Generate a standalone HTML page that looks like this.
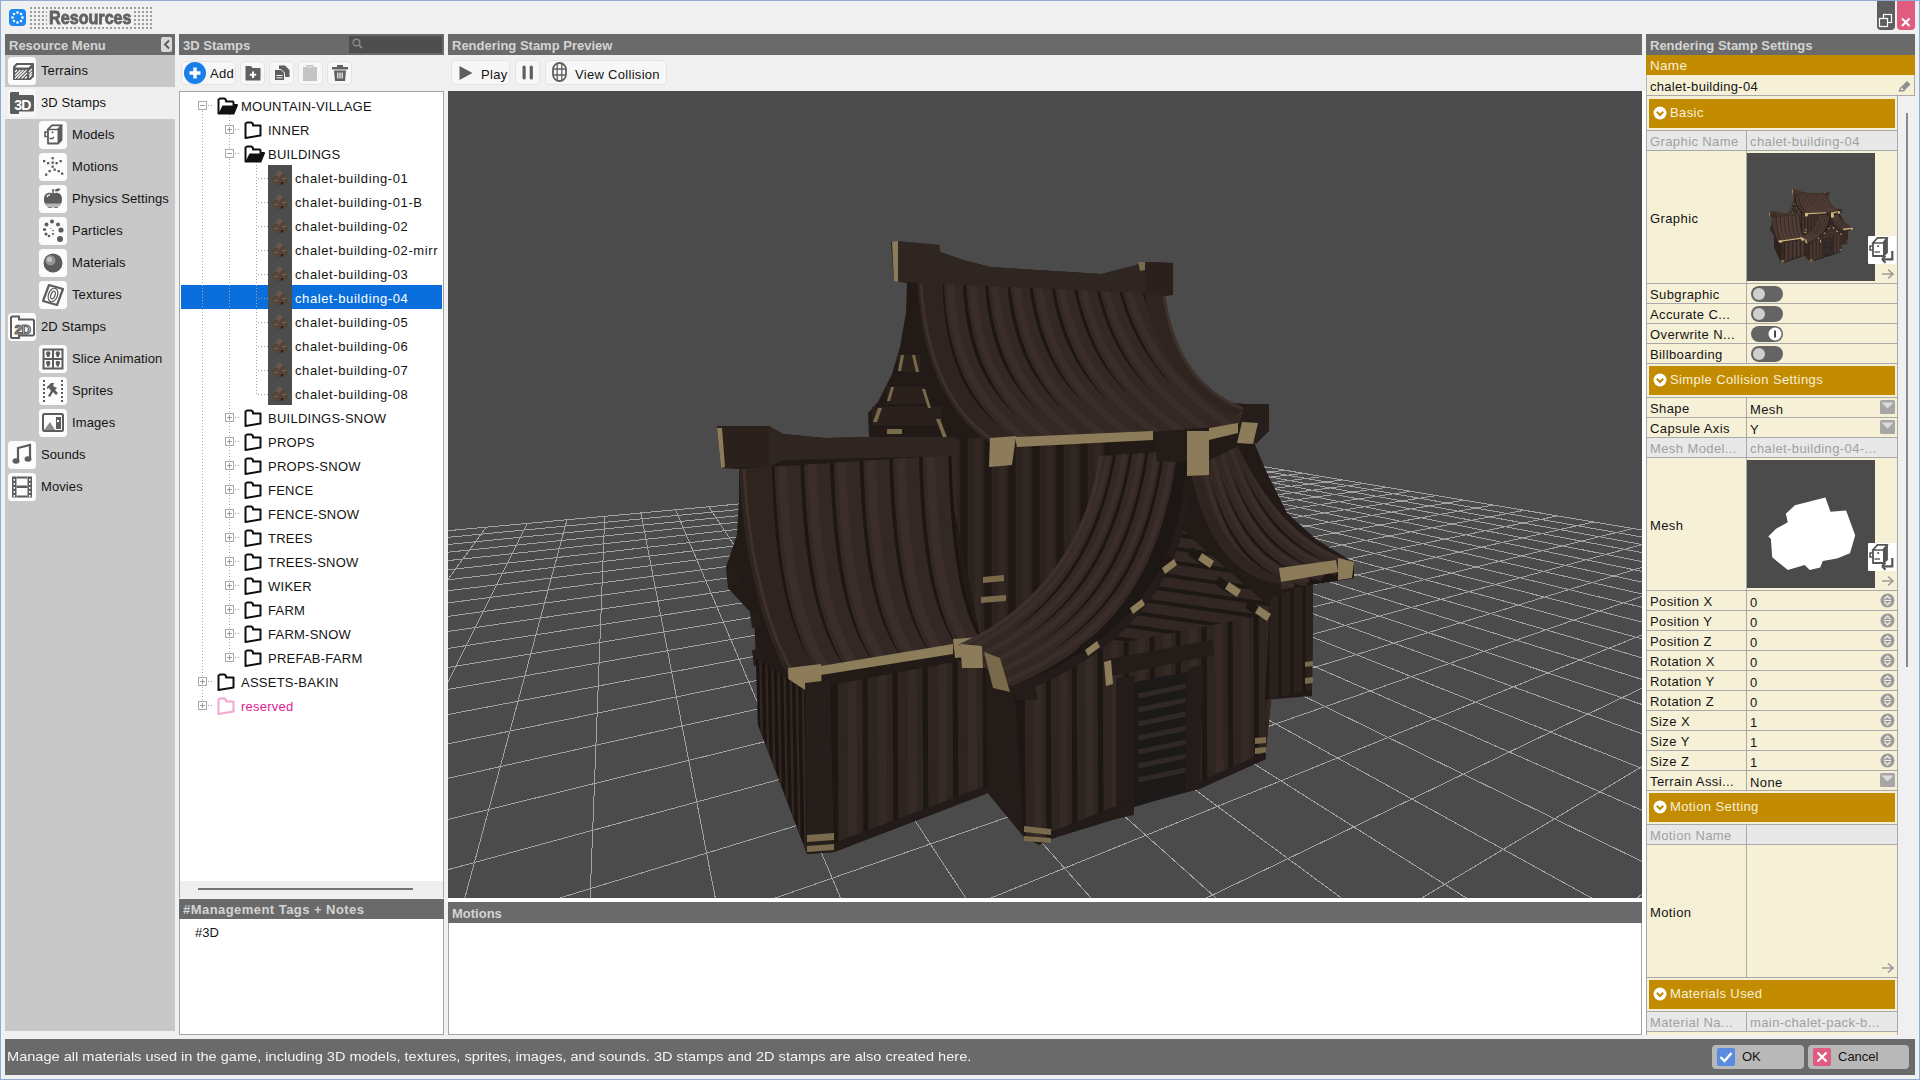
<!DOCTYPE html><html><head><meta charset="utf-8"><style>
*{margin:0;padding:0;box-sizing:border-box}
html,body{width:1920px;height:1080px;overflow:hidden;background:#f0f0f0;font-family:"Liberation Sans",sans-serif}
body>div,body>svg{position:absolute}
.t{white-space:nowrap;font-size:13px;line-height:16px;color:#141414}
.hd{white-space:nowrap;font-size:13px;line-height:16px;color:#d4d4d4;font-weight:bold}
</style></head><body>
<div style="left:0px;top:0px;width:1920px;height:1080px;border:1px solid #8eacd4;"></div>
<svg style="left:9px;top:9px" width="17" height="17" viewBox="0 0 17 17"><rect x="0" y="0" width="17" height="17" rx="4" fill="#1a88f0"/><circle cx="13.50" cy="8.50" r="1.3" fill="#fff"/><circle cx="12.04" cy="12.04" r="1.3" fill="#fff"/><circle cx="8.50" cy="13.50" r="1.3" fill="#fff"/><circle cx="4.96" cy="12.04" r="1.3" fill="#fff"/><circle cx="3.50" cy="8.50" r="1.3" fill="#fff"/><circle cx="4.96" cy="4.96" r="1.3" fill="#fff"/><circle cx="8.50" cy="3.50" r="1.3" fill="#fff"/><circle cx="12.04" cy="4.96" r="1.3" fill="#fff"/></svg>
<svg style="left:30px;top:7px" width="123" height="23"><rect x="0" y="0" width="2" height="2" fill="#9c9c9c"/><rect x="0" y="4" width="2" height="2" fill="#9c9c9c"/><rect x="0" y="8" width="2" height="2" fill="#9c9c9c"/><rect x="0" y="12" width="2" height="2" fill="#9c9c9c"/><rect x="0" y="16" width="2" height="2" fill="#9c9c9c"/><rect x="0" y="20" width="2" height="2" fill="#9c9c9c"/><rect x="4" y="0" width="2" height="2" fill="#9c9c9c"/><rect x="4" y="4" width="2" height="2" fill="#9c9c9c"/><rect x="4" y="8" width="2" height="2" fill="#9c9c9c"/><rect x="4" y="12" width="2" height="2" fill="#9c9c9c"/><rect x="4" y="16" width="2" height="2" fill="#9c9c9c"/><rect x="4" y="20" width="2" height="2" fill="#9c9c9c"/><rect x="8" y="0" width="2" height="2" fill="#9c9c9c"/><rect x="8" y="4" width="2" height="2" fill="#9c9c9c"/><rect x="8" y="8" width="2" height="2" fill="#9c9c9c"/><rect x="8" y="12" width="2" height="2" fill="#9c9c9c"/><rect x="8" y="16" width="2" height="2" fill="#9c9c9c"/><rect x="8" y="20" width="2" height="2" fill="#9c9c9c"/><rect x="12" y="0" width="2" height="2" fill="#9c9c9c"/><rect x="12" y="4" width="2" height="2" fill="#9c9c9c"/><rect x="12" y="8" width="2" height="2" fill="#9c9c9c"/><rect x="12" y="12" width="2" height="2" fill="#9c9c9c"/><rect x="12" y="16" width="2" height="2" fill="#9c9c9c"/><rect x="12" y="20" width="2" height="2" fill="#9c9c9c"/><rect x="16" y="0" width="2" height="2" fill="#9c9c9c"/><rect x="16" y="4" width="2" height="2" fill="#9c9c9c"/><rect x="16" y="8" width="2" height="2" fill="#9c9c9c"/><rect x="16" y="12" width="2" height="2" fill="#9c9c9c"/><rect x="16" y="16" width="2" height="2" fill="#9c9c9c"/><rect x="16" y="20" width="2" height="2" fill="#9c9c9c"/><rect x="20" y="0" width="2" height="2" fill="#9c9c9c"/><rect x="20" y="4" width="2" height="2" fill="#9c9c9c"/><rect x="20" y="8" width="2" height="2" fill="#9c9c9c"/><rect x="20" y="12" width="2" height="2" fill="#9c9c9c"/><rect x="20" y="16" width="2" height="2" fill="#9c9c9c"/><rect x="20" y="20" width="2" height="2" fill="#9c9c9c"/><rect x="24" y="0" width="2" height="2" fill="#9c9c9c"/><rect x="24" y="4" width="2" height="2" fill="#9c9c9c"/><rect x="24" y="8" width="2" height="2" fill="#9c9c9c"/><rect x="24" y="12" width="2" height="2" fill="#9c9c9c"/><rect x="24" y="16" width="2" height="2" fill="#9c9c9c"/><rect x="24" y="20" width="2" height="2" fill="#9c9c9c"/><rect x="28" y="0" width="2" height="2" fill="#9c9c9c"/><rect x="28" y="4" width="2" height="2" fill="#9c9c9c"/><rect x="28" y="8" width="2" height="2" fill="#9c9c9c"/><rect x="28" y="12" width="2" height="2" fill="#9c9c9c"/><rect x="28" y="16" width="2" height="2" fill="#9c9c9c"/><rect x="28" y="20" width="2" height="2" fill="#9c9c9c"/><rect x="32" y="0" width="2" height="2" fill="#9c9c9c"/><rect x="32" y="4" width="2" height="2" fill="#9c9c9c"/><rect x="32" y="8" width="2" height="2" fill="#9c9c9c"/><rect x="32" y="12" width="2" height="2" fill="#9c9c9c"/><rect x="32" y="16" width="2" height="2" fill="#9c9c9c"/><rect x="32" y="20" width="2" height="2" fill="#9c9c9c"/><rect x="36" y="0" width="2" height="2" fill="#9c9c9c"/><rect x="36" y="4" width="2" height="2" fill="#9c9c9c"/><rect x="36" y="8" width="2" height="2" fill="#9c9c9c"/><rect x="36" y="12" width="2" height="2" fill="#9c9c9c"/><rect x="36" y="16" width="2" height="2" fill="#9c9c9c"/><rect x="36" y="20" width="2" height="2" fill="#9c9c9c"/><rect x="40" y="0" width="2" height="2" fill="#9c9c9c"/><rect x="40" y="4" width="2" height="2" fill="#9c9c9c"/><rect x="40" y="8" width="2" height="2" fill="#9c9c9c"/><rect x="40" y="12" width="2" height="2" fill="#9c9c9c"/><rect x="40" y="16" width="2" height="2" fill="#9c9c9c"/><rect x="40" y="20" width="2" height="2" fill="#9c9c9c"/><rect x="44" y="0" width="2" height="2" fill="#9c9c9c"/><rect x="44" y="4" width="2" height="2" fill="#9c9c9c"/><rect x="44" y="8" width="2" height="2" fill="#9c9c9c"/><rect x="44" y="12" width="2" height="2" fill="#9c9c9c"/><rect x="44" y="16" width="2" height="2" fill="#9c9c9c"/><rect x="44" y="20" width="2" height="2" fill="#9c9c9c"/><rect x="48" y="0" width="2" height="2" fill="#9c9c9c"/><rect x="48" y="4" width="2" height="2" fill="#9c9c9c"/><rect x="48" y="8" width="2" height="2" fill="#9c9c9c"/><rect x="48" y="12" width="2" height="2" fill="#9c9c9c"/><rect x="48" y="16" width="2" height="2" fill="#9c9c9c"/><rect x="48" y="20" width="2" height="2" fill="#9c9c9c"/><rect x="52" y="0" width="2" height="2" fill="#9c9c9c"/><rect x="52" y="4" width="2" height="2" fill="#9c9c9c"/><rect x="52" y="8" width="2" height="2" fill="#9c9c9c"/><rect x="52" y="12" width="2" height="2" fill="#9c9c9c"/><rect x="52" y="16" width="2" height="2" fill="#9c9c9c"/><rect x="52" y="20" width="2" height="2" fill="#9c9c9c"/><rect x="56" y="0" width="2" height="2" fill="#9c9c9c"/><rect x="56" y="4" width="2" height="2" fill="#9c9c9c"/><rect x="56" y="8" width="2" height="2" fill="#9c9c9c"/><rect x="56" y="12" width="2" height="2" fill="#9c9c9c"/><rect x="56" y="16" width="2" height="2" fill="#9c9c9c"/><rect x="56" y="20" width="2" height="2" fill="#9c9c9c"/><rect x="60" y="0" width="2" height="2" fill="#9c9c9c"/><rect x="60" y="4" width="2" height="2" fill="#9c9c9c"/><rect x="60" y="8" width="2" height="2" fill="#9c9c9c"/><rect x="60" y="12" width="2" height="2" fill="#9c9c9c"/><rect x="60" y="16" width="2" height="2" fill="#9c9c9c"/><rect x="60" y="20" width="2" height="2" fill="#9c9c9c"/><rect x="64" y="0" width="2" height="2" fill="#9c9c9c"/><rect x="64" y="4" width="2" height="2" fill="#9c9c9c"/><rect x="64" y="8" width="2" height="2" fill="#9c9c9c"/><rect x="64" y="12" width="2" height="2" fill="#9c9c9c"/><rect x="64" y="16" width="2" height="2" fill="#9c9c9c"/><rect x="64" y="20" width="2" height="2" fill="#9c9c9c"/><rect x="68" y="0" width="2" height="2" fill="#9c9c9c"/><rect x="68" y="4" width="2" height="2" fill="#9c9c9c"/><rect x="68" y="8" width="2" height="2" fill="#9c9c9c"/><rect x="68" y="12" width="2" height="2" fill="#9c9c9c"/><rect x="68" y="16" width="2" height="2" fill="#9c9c9c"/><rect x="68" y="20" width="2" height="2" fill="#9c9c9c"/><rect x="72" y="0" width="2" height="2" fill="#9c9c9c"/><rect x="72" y="4" width="2" height="2" fill="#9c9c9c"/><rect x="72" y="8" width="2" height="2" fill="#9c9c9c"/><rect x="72" y="12" width="2" height="2" fill="#9c9c9c"/><rect x="72" y="16" width="2" height="2" fill="#9c9c9c"/><rect x="72" y="20" width="2" height="2" fill="#9c9c9c"/><rect x="76" y="0" width="2" height="2" fill="#9c9c9c"/><rect x="76" y="4" width="2" height="2" fill="#9c9c9c"/><rect x="76" y="8" width="2" height="2" fill="#9c9c9c"/><rect x="76" y="12" width="2" height="2" fill="#9c9c9c"/><rect x="76" y="16" width="2" height="2" fill="#9c9c9c"/><rect x="76" y="20" width="2" height="2" fill="#9c9c9c"/><rect x="80" y="0" width="2" height="2" fill="#9c9c9c"/><rect x="80" y="4" width="2" height="2" fill="#9c9c9c"/><rect x="80" y="8" width="2" height="2" fill="#9c9c9c"/><rect x="80" y="12" width="2" height="2" fill="#9c9c9c"/><rect x="80" y="16" width="2" height="2" fill="#9c9c9c"/><rect x="80" y="20" width="2" height="2" fill="#9c9c9c"/><rect x="84" y="0" width="2" height="2" fill="#9c9c9c"/><rect x="84" y="4" width="2" height="2" fill="#9c9c9c"/><rect x="84" y="8" width="2" height="2" fill="#9c9c9c"/><rect x="84" y="12" width="2" height="2" fill="#9c9c9c"/><rect x="84" y="16" width="2" height="2" fill="#9c9c9c"/><rect x="84" y="20" width="2" height="2" fill="#9c9c9c"/><rect x="88" y="0" width="2" height="2" fill="#9c9c9c"/><rect x="88" y="4" width="2" height="2" fill="#9c9c9c"/><rect x="88" y="8" width="2" height="2" fill="#9c9c9c"/><rect x="88" y="12" width="2" height="2" fill="#9c9c9c"/><rect x="88" y="16" width="2" height="2" fill="#9c9c9c"/><rect x="88" y="20" width="2" height="2" fill="#9c9c9c"/><rect x="92" y="0" width="2" height="2" fill="#9c9c9c"/><rect x="92" y="4" width="2" height="2" fill="#9c9c9c"/><rect x="92" y="8" width="2" height="2" fill="#9c9c9c"/><rect x="92" y="12" width="2" height="2" fill="#9c9c9c"/><rect x="92" y="16" width="2" height="2" fill="#9c9c9c"/><rect x="92" y="20" width="2" height="2" fill="#9c9c9c"/><rect x="96" y="0" width="2" height="2" fill="#9c9c9c"/><rect x="96" y="4" width="2" height="2" fill="#9c9c9c"/><rect x="96" y="8" width="2" height="2" fill="#9c9c9c"/><rect x="96" y="12" width="2" height="2" fill="#9c9c9c"/><rect x="96" y="16" width="2" height="2" fill="#9c9c9c"/><rect x="96" y="20" width="2" height="2" fill="#9c9c9c"/><rect x="100" y="0" width="2" height="2" fill="#9c9c9c"/><rect x="100" y="4" width="2" height="2" fill="#9c9c9c"/><rect x="100" y="8" width="2" height="2" fill="#9c9c9c"/><rect x="100" y="12" width="2" height="2" fill="#9c9c9c"/><rect x="100" y="16" width="2" height="2" fill="#9c9c9c"/><rect x="100" y="20" width="2" height="2" fill="#9c9c9c"/><rect x="104" y="0" width="2" height="2" fill="#9c9c9c"/><rect x="104" y="4" width="2" height="2" fill="#9c9c9c"/><rect x="104" y="8" width="2" height="2" fill="#9c9c9c"/><rect x="104" y="12" width="2" height="2" fill="#9c9c9c"/><rect x="104" y="16" width="2" height="2" fill="#9c9c9c"/><rect x="104" y="20" width="2" height="2" fill="#9c9c9c"/><rect x="108" y="0" width="2" height="2" fill="#9c9c9c"/><rect x="108" y="4" width="2" height="2" fill="#9c9c9c"/><rect x="108" y="8" width="2" height="2" fill="#9c9c9c"/><rect x="108" y="12" width="2" height="2" fill="#9c9c9c"/><rect x="108" y="16" width="2" height="2" fill="#9c9c9c"/><rect x="108" y="20" width="2" height="2" fill="#9c9c9c"/><rect x="112" y="0" width="2" height="2" fill="#9c9c9c"/><rect x="112" y="4" width="2" height="2" fill="#9c9c9c"/><rect x="112" y="8" width="2" height="2" fill="#9c9c9c"/><rect x="112" y="12" width="2" height="2" fill="#9c9c9c"/><rect x="112" y="16" width="2" height="2" fill="#9c9c9c"/><rect x="112" y="20" width="2" height="2" fill="#9c9c9c"/><rect x="116" y="0" width="2" height="2" fill="#9c9c9c"/><rect x="116" y="4" width="2" height="2" fill="#9c9c9c"/><rect x="116" y="8" width="2" height="2" fill="#9c9c9c"/><rect x="116" y="12" width="2" height="2" fill="#9c9c9c"/><rect x="116" y="16" width="2" height="2" fill="#9c9c9c"/><rect x="116" y="20" width="2" height="2" fill="#9c9c9c"/><rect x="120" y="0" width="2" height="2" fill="#9c9c9c"/><rect x="120" y="4" width="2" height="2" fill="#9c9c9c"/><rect x="120" y="8" width="2" height="2" fill="#9c9c9c"/><rect x="120" y="12" width="2" height="2" fill="#9c9c9c"/><rect x="120" y="16" width="2" height="2" fill="#9c9c9c"/><rect x="120" y="20" width="2" height="2" fill="#9c9c9c"/></svg>
<div style="left:47px;top:10px;width:87px;height:16px;background:#f0f0f0"></div>
<div style="left:49px;top:5px;font-size:19px;line-height:26px;font-weight:bold;color:#626262;-webkit-text-stroke:0.9px #626262;transform:scaleX(0.85);transform-origin:0 0;white-space:nowrap">Resources</div>
<div style="left:1877px;top:1px;width:18px;height:29px;background:#5e5e5e;border-radius:0 0 4px 4px"></div>
<svg style="left:1877px;top:1px" width="18" height="29"><rect x="6.5" y="13.5" width="8" height="8" fill="none" stroke="#fff" stroke-width="1.2"/><rect x="2.5" y="17.5" width="8" height="8" fill="#5e5e5e" stroke="#fff" stroke-width="1.2"/></svg>
<div style="left:1897px;top:1px;width:18px;height:29px;background:#e05b7f;border-radius:0 0 4px 4px"></div>
<svg style="left:1897px;top:1px" width="18" height="29"><path d="M5 17.5 L12.5 25 M12.5 17.5 L5 25" stroke="#fff" stroke-width="2"/></svg>
<div style="left:5px;top:34px;width:170px;height:21px;background:#6a6a6a"></div>
<div class="hd" style="left:9px;top:38px;">Resource Menu</div>
<div style="left:179px;top:34px;width:265px;height:21px;background:#6a6a6a"></div>
<div class="hd" style="left:183px;top:38px;">3D Stamps</div>
<div style="left:448px;top:34px;width:1194px;height:21px;background:#6a6a6a"></div>
<div class="hd" style="left:452px;top:38px;">Rendering Stamp Preview</div>
<div style="left:1646px;top:34px;width:269px;height:21px;background:#6a6a6a"></div>
<div class="hd" style="left:1650px;top:38px;">Rendering Stamp Settings</div>
<div style="left:161px;top:37px;width:11px;height:15px;background:#d8d8d8;border-radius:2px"></div>
<svg style="left:161px;top:37px" width="11" height="15"><path d="M8 3.5 L4 7.5 L8 11.5" fill="none" stroke="#5a5a5a" stroke-width="1.8"/></svg>
<div style="left:349px;top:36px;width:93px;height:17px;background:#4e4e4e"></div>
<svg style="left:351px;top:37px" width="14" height="14"><circle cx="5.5" cy="5.5" r="3.3" fill="none" stroke="#8a8a8a" stroke-width="1.4"/><path d="M8 8 L11 11" stroke="#8a8a8a" stroke-width="1.8"/></svg>
<div style="left:5px;top:55px;width:170px;height:976px;background:#c8c8c8"></div>
<div style="left:5px;top:87px;width:170px;height:32px;background:#efefef"></div>
<div style="left:8px;top:57px;width:28px;height:28px;background:#fcfcfc;border-radius:4px"></div>
<svg style="left:8px;top:57px" width="28" height="28" viewBox="0 0 28 28"><path d="M5 9.5 L8.5 6 H25.5 L26 6.5 V19.5 L22.5 23 H5.5 L5 22.5 Z" fill="#5c5c5c"/><path d="M9.5 8 H23 L20.5 10.5 H7 Z" fill="#fff"/><path d="M7 15 L9 13 M7 18.5 L12.5 13 M7 21.5 L15.5 13 M10 21.5 L18.5 13 M13.5 21.5 L19 16 M17 21.5 L19 19.5 M21 15 L24 12 M21 18 L24 15 M21 20.5 L24 17.5" stroke="#fff" stroke-width="1.1"/></svg>
<div class="t" style="left:41px;top:63px;font-size:13px;letter-spacing:0.1px">Terrains</div>
<div style="left:8px;top:89px;width:28px;height:28px;background:#f7f7f7;border-radius:4px"></div>
<svg style="left:8px;top:89px" width="28" height="28" viewBox="0 0 28 28"><path d="M2 4 L3 3 H11 V6 H25 L26 7 V21.5 L25 22.5 H11 V25 H3 L2 24 Z" fill="#5c5c5c"/><text x="14.5" y="21" font-family="Liberation Sans" font-weight="bold" font-size="14" fill="#fff" text-anchor="middle" letter-spacing="-0.8">3D</text></svg>
<div class="t" style="left:41px;top:95px;font-size:13px;letter-spacing:0.1px">3D Stamps</div>
<div style="left:39px;top:121px;width:28px;height:28px;background:#fcfcfc;border-radius:4px"></div>
<svg style="left:39px;top:121px" width="28" height="28" viewBox="0 0 28 28"><path d="M9 8.5 L13 4.5 H22.5 V19 L19 22.5 H9 Z" fill="#fff" stroke="#5c5c5c" stroke-width="1.8" stroke-linejoin="round"/><path d="M13 4.5 L9 8.5 H18.5 L22.5 4.5 Z" fill="#fff" stroke="#5c5c5c" stroke-width="1.5"/><path d="M18.5 8.5 L22.5 4.5 V19 L18.5 22.5 Z" fill="#5c5c5c"/><path d="M9 11 H6 V15.5 H9" fill="none" stroke="#5c5c5c" stroke-width="1.6"/><rect x="12.6" y="10.5" width="1.8" height="1.8" fill="#5c5c5c"/><path d="M10.5 17.5 H13.5 L15 16" fill="none" stroke="#5c5c5c" stroke-width="1.4"/></svg>
<div class="t" style="left:72px;top:127px;font-size:13px;letter-spacing:0.1px">Models</div>
<div style="left:39px;top:153px;width:28px;height:28px;background:#fcfcfc;border-radius:4px"></div>
<svg style="left:39px;top:153px" width="28" height="28" viewBox="0 0 28 28"><rect x="12.5" y="4" width="2.3" height="2.3" fill="#5c5c5c"/><rect x="4" y="7" width="2.3" height="2.3" fill="#5c5c5c"/><rect x="8" y="9" width="2.3" height="2.3" fill="#5c5c5c"/><rect x="12.5" y="8.5" width="2.3" height="2.3" fill="#5c5c5c"/><rect x="16.5" y="9" width="2.3" height="2.3" fill="#5c5c5c"/><rect x="20.5" y="7" width="2.3" height="2.3" fill="#5c5c5c"/><rect x="12.5" y="12.5" width="2.3" height="2.3" fill="#5c5c5c"/><rect x="14.5" y="15.5" width="2.3" height="2.3" fill="#5c5c5c"/><rect x="9.5" y="17" width="2.3" height="2.3" fill="#5c5c5c"/><rect x="18.5" y="17" width="2.3" height="2.3" fill="#5c5c5c"/><rect x="6" y="20.5" width="2.3" height="2.3" fill="#5c5c5c"/><rect x="22" y="19.5" width="2.3" height="2.3" fill="#5c5c5c"/></svg>
<div class="t" style="left:72px;top:159px;font-size:13px;letter-spacing:0.1px">Motions</div>
<div style="left:39px;top:185px;width:28px;height:28px;background:#fcfcfc;border-radius:4px"></div>
<svg style="left:39px;top:185px" width="28" height="28" viewBox="0 0 28 28"><path d="M14 8.5 C10 6.5 5 8 5 14 C5 19.5 8 23 11 23 C12.5 23 13 22.3 14 22.3 C15 22.3 15.5 23 17 23 C20 23 23 19.5 23 14 C23 8 18 6.5 14 8.5 Z" fill="#5c5c5c"/><path d="M14 8.5 V4" stroke="#5c5c5c" stroke-width="1.6"/><path d="M15.5 6 C16.5 3.5 19.5 3 21.5 4 C20.5 6.5 17.5 7 15.5 6 Z" fill="#5c5c5c"/><path d="M8 12 C8.5 10.5 10 9.8 11 10" stroke="#fff" stroke-width="1.3" fill="none"/><path d="M5.5 18.5 H22.5 L21 22 H7 Z" fill="#fff" opacity="0.55"/></svg>
<div class="t" style="left:72px;top:191px;font-size:13px;letter-spacing:0.1px">Physics Settings</div>
<div style="left:39px;top:217px;width:28px;height:28px;background:#fcfcfc;border-radius:4px"></div>
<svg style="left:39px;top:217px" width="28" height="28" viewBox="0 0 28 28"><circle cx="13" cy="4.5" r="2" fill="#5c5c5c"/><circle cx="7.5" cy="7.5" r="1.9" fill="#5c5c5c"/><circle cx="19" cy="7.5" r="2" fill="#5c5c5c"/><circle cx="5.5" cy="12.5" r="1.6" fill="#5c5c5c"/><circle cx="22" cy="13" r="2.6" fill="#5c5c5c"/><circle cx="7" cy="17" r="1.6" fill="#5c5c5c"/><circle cx="10" cy="19" r="1.3" fill="#5c5c5c"/><circle cx="14" cy="17" r="1.1" fill="#5c5c5c"/><circle cx="14" cy="13.5" r="0.8" fill="#5c5c5c"/><circle cx="12" cy="11.5" r="0.5" fill="#5c5c5c"/><circle cx="21" cy="22" r="3" fill="#5c5c5c"/></svg>
<div class="t" style="left:72px;top:223px;font-size:13px;letter-spacing:0.1px">Particles</div>
<div style="left:39px;top:249px;width:28px;height:28px;background:#fcfcfc;border-radius:4px"></div>
<svg style="left:39px;top:249px" width="28" height="28" viewBox="0 0 28 28"><circle cx="14" cy="14" r="9.5" fill="#5c5c5c"/><circle cx="11.5" cy="11.5" r="5" fill="#fff" opacity="0.35"/><circle cx="10.5" cy="10.5" r="2.5" fill="#fff" opacity="0.45"/></svg>
<div class="t" style="left:72px;top:255px;font-size:13px;letter-spacing:0.1px">Materials</div>
<div style="left:39px;top:281px;width:28px;height:28px;background:#fcfcfc;border-radius:4px"></div>
<svg style="left:39px;top:281px" width="28" height="28" viewBox="0 0 28 28"><path d="M10 4 L24 8 L18 24 L4 20 Z" fill="none" stroke="#5c5c5c" stroke-width="2.2" stroke-linejoin="round"/><ellipse cx="14" cy="14" rx="2" ry="4" transform="rotate(20 14 14)" fill="none" stroke="#5c5c5c" stroke-width="1.2"/><ellipse cx="14" cy="14" rx="4.5" ry="7" transform="rotate(20 14 14)" fill="none" stroke="#5c5c5c" stroke-width="1.2"/></svg>
<div class="t" style="left:72px;top:287px;font-size:13px;letter-spacing:0.1px">Textures</div>
<div style="left:8px;top:313px;width:28px;height:28px;background:#fcfcfc;border-radius:4px"></div>
<svg style="left:8px;top:313px" width="28" height="28" viewBox="0 0 28 28"><path d="M3 4.5 L4 3.5 H11 V6.5 H25 L26 7.5 V21.5 L25 22.5 H11 V25 H4 L3 24 Z" fill="none" stroke="#5c5c5c" stroke-width="2"/><text x="14.5" y="21" font-family="Liberation Sans" font-weight="bold" font-size="13" fill="none" stroke="#5c5c5c" stroke-width="1.2" text-anchor="middle" letter-spacing="-0.6">2D</text></svg>
<div class="t" style="left:41px;top:319px;font-size:13px;letter-spacing:0.1px">2D Stamps</div>
<div style="left:39px;top:345px;width:28px;height:28px;background:#fcfcfc;border-radius:4px"></div>
<svg style="left:39px;top:345px" width="28" height="28" viewBox="0 0 28 28"><rect x="4.5" y="4.5" width="19" height="19" fill="none" stroke="#5c5c5c" stroke-width="2"/><path d="M14 4.5 V23.5 M4.5 14 H23.5" stroke="#5c5c5c" stroke-width="2"/><circle cx="9.2" cy="8.5" r="2.2" fill="#5c5c5c"/><rect x="7.999999999999999" y="9.5" width="2.4" height="2.5" fill="#5c5c5c"/><circle cx="18.8" cy="8.5" r="2.2" fill="#5c5c5c"/><rect x="17.6" y="9.5" width="2.4" height="2.5" fill="#5c5c5c"/><circle cx="9.2" cy="18" r="2.2" fill="#5c5c5c"/><rect x="7.999999999999999" y="19" width="2.4" height="2.5" fill="#5c5c5c"/><circle cx="18.8" cy="18" r="2.2" fill="#5c5c5c"/><rect x="17.6" y="19" width="2.4" height="2.5" fill="#5c5c5c"/></svg>
<div class="t" style="left:72px;top:351px;font-size:13px;letter-spacing:0.1px">Slice Animation</div>
<div style="left:39px;top:377px;width:28px;height:28px;background:#fcfcfc;border-radius:4px"></div>
<svg style="left:39px;top:377px" width="28" height="28" viewBox="0 0 28 28"><rect x="4" y="3" width="2" height="2" fill="#5c5c5c"/><rect x="4" y="7" width="2" height="2" fill="#5c5c5c"/><rect x="4" y="11" width="2" height="2" fill="#5c5c5c"/><rect x="4" y="15" width="2" height="2" fill="#5c5c5c"/><rect x="4" y="19" width="2" height="2" fill="#5c5c5c"/><rect x="4" y="23" width="2" height="2" fill="#5c5c5c"/><rect x="22" y="3" width="2" height="2" fill="#5c5c5c"/><rect x="22" y="7" width="2" height="2" fill="#5c5c5c"/><rect x="22" y="11" width="2" height="2" fill="#5c5c5c"/><rect x="22" y="15" width="2" height="2" fill="#5c5c5c"/><rect x="22" y="19" width="2" height="2" fill="#5c5c5c"/><rect x="22" y="23" width="2" height="2" fill="#5c5c5c"/><path d="M12 6 L15 6 L14 9 L18 11 L16 13 L19 16 L17 18 L14 15 L11 20 L9 19 L12 14 L10 11 L8 12 L8 10 Z" fill="#5c5c5c"/></svg>
<div class="t" style="left:72px;top:383px;font-size:13px;letter-spacing:0.1px">Sprites</div>
<div style="left:39px;top:409px;width:28px;height:28px;background:#fcfcfc;border-radius:4px"></div>
<svg style="left:39px;top:409px" width="28" height="28" viewBox="0 0 28 28"><rect x="4" y="5" width="20" height="17" rx="1.5" fill="none" stroke="#5c5c5c" stroke-width="2"/><path d="M5 21 L11 13 L16 21 Z" fill="#5c5c5c" opacity="0.7"/><path d="M17 8 H22 V20 H17 Z" fill="#5c5c5c"/><circle cx="19" cy="12" r="1.2" fill="#fff"/></svg>
<div class="t" style="left:72px;top:415px;font-size:13px;letter-spacing:0.1px">Images</div>
<div style="left:8px;top:441px;width:28px;height:28px;background:#fcfcfc;border-radius:4px"></div>
<svg style="left:8px;top:441px" width="28" height="28" viewBox="0 0 28 28"><path d="M10 19 V7 L22 4 V17" fill="none" stroke="#5c5c5c" stroke-width="2.2"/><ellipse cx="8" cy="20" rx="3.5" ry="2.8" fill="#5c5c5c"/><ellipse cx="20" cy="18" rx="3.5" ry="2.8" fill="#5c5c5c"/></svg>
<div class="t" style="left:41px;top:447px;font-size:13px;letter-spacing:0.1px">Sounds</div>
<div style="left:8px;top:473px;width:28px;height:28px;background:#fcfcfc;border-radius:4px"></div>
<svg style="left:8px;top:473px" width="28" height="28" viewBox="0 0 28 28"><rect x="4" y="3.5" width="4.5" height="21" fill="#5c5c5c"/><rect x="19.5" y="3.5" width="4.5" height="21" fill="#5c5c5c"/><rect x="8.5" y="12.5" width="11" height="2.5" fill="#5c5c5c"/><rect x="8.5" y="3.5" width="11" height="2" fill="#5c5c5c"/><rect x="8.5" y="22.5" width="11" height="2" fill="#5c5c5c"/><rect x="5.5" y="6" width="1.5" height="1.8" fill="#fff"/><rect x="5.5" y="10" width="1.5" height="1.8" fill="#fff"/><rect x="5.5" y="14" width="1.5" height="1.8" fill="#fff"/><rect x="5.5" y="18" width="1.5" height="1.8" fill="#fff"/><rect x="5.5" y="22" width="1.5" height="1.8" fill="#fff"/><rect x="21" y="6" width="1.5" height="1.8" fill="#fff"/><rect x="21" y="10" width="1.5" height="1.8" fill="#fff"/><rect x="21" y="14" width="1.5" height="1.8" fill="#fff"/><rect x="21" y="18" width="1.5" height="1.8" fill="#fff"/><rect x="21" y="22" width="1.5" height="1.8" fill="#fff"/></svg>
<div class="t" style="left:41px;top:479px;font-size:13px;letter-spacing:0.1px">Movies</div>
<div style="left:181px;top:61px;width:55px;height:24px;background:#f7f7f7;border:1px solid #e4e4e4;border-radius:4px"></div>
<div style="left:240px;top:61px;width:25px;height:24px;background:#f7f7f7;border:1px solid #e4e4e4;border-radius:4px"></div>
<div style="left:269px;top:61px;width:25px;height:24px;background:#f7f7f7;border:1px solid #e4e4e4;border-radius:4px"></div>
<div style="left:298px;top:61px;width:25px;height:24px;background:#f7f7f7;border:1px solid #e4e4e4;border-radius:4px"></div>
<div style="left:327px;top:61px;width:25px;height:24px;background:#f7f7f7;border:1px solid #e4e4e4;border-radius:4px"></div>
<svg style="left:184px;top:62px" width="22" height="22"><circle cx="11" cy="11" r="11" fill="#1a7ee8"/><path d="M11 5.5 V16.5 M5.5 11 H16.5" stroke="#fff" stroke-width="3.4"/></svg>
<div class="t" style="left:210px;top:66px;font-size:13px;letter-spacing:0.3px">Add</div>
<svg style="left:245px;top:65px" width="16" height="16"><path d="M0.5 1 H6 L7.5 3 H15.5 V15.5 H0.5 Z" fill="#5f5f5f"/><path d="M8 6.5 V13 M4.8 9.8 H11.2" stroke="#fff" stroke-width="2"/></svg>
<svg style="left:274px;top:65px" width="16" height="16"><path d="M5 0.5 H11 L15.5 5 V12 H5 Z" fill="#5f5f5f"/><path d="M0.5 4.5 H7 L10.5 8 V15.5 H0.5 Z" fill="#5f5f5f" stroke="#f7f7f7" stroke-width="1"/><path d="M2.5 10.5 H8.5 M2.5 12.8 H8.5" stroke="#f7f7f7" stroke-width="1"/></svg>
<svg style="left:302px;top:65px" width="16" height="16"><rect x="1" y="2" width="14" height="14" fill="#c4c4c4"/><rect x="5" y="0.5" width="6" height="3" fill="#dadada" stroke="#c4c4c4"/></svg>
<svg style="left:332px;top:65px" width="16" height="17"><rect x="5" y="0" width="6" height="2.5" fill="#5f5f5f"/><rect x="0" y="2" width="16" height="2.5" fill="#5f5f5f"/><path d="M2 5.5 H14 L13 16 H3 Z" fill="#5f5f5f"/><path d="M5.8 7.5 V13.5 M8 7.5 V13.5 M10.2 7.5 V13.5" stroke="#f7f7f7" stroke-width="1.2"/></svg>
<div style="left:179px;top:91px;width:265px;height:807px;background:#fff;border:1px solid #a5a5a5;border-bottom:none"></div>
<div style="left:180px;top:881px;width:263px;height:17px;background:#efefef"></div>
<div style="left:198px;top:888px;width:215px;height:2px;background:#747474"></div>
<div style="left:181px;top:285px;width:261px;height:24px;background:#0a6fdc"></div>
<svg style="left:202px;top:111px" width="1" height="595"><path d="M0.5 0 V595" stroke="#a8a8a8" stroke-dasharray="1 2"/></svg>
<svg style="left:229px;top:114px" width="1" height="544"><path d="M0.5 0 V544" stroke="#a8a8a8" stroke-dasharray="1 2"/></svg>
<svg style="left:256px;top:162px" width="1" height="232"><path d="M0.5 0 V232" stroke="#a8a8a8" stroke-dasharray="1 2"/></svg>
<svg style="left:198px;top:101px" width="9" height="9"><rect x="0.5" y="0.5" width="8" height="8" fill="#fff" stroke="#a8a8a8"/><path d="M2 4.5 H7" stroke="#9a9a9a" stroke-width="1"/></svg>
<svg style="left:208px;top:105px" width="6" height="1"><path d="M0 0.5 H6" stroke="#a0a0a0" stroke-dasharray="1 2"/></svg>
<svg style="left:217px;top:97px" width="22" height="19"><path d="M1.5 16.5 V2.5 L3 1.5 H7.5 L9 3 V4.5 H16 L16.5 5.5 V8 H20 L16.5 16.5 Z" fill="#fff" stroke="#111" stroke-width="2" stroke-linejoin="round"/><path d="M1.5 16.5 L5.5 8.5 H20 L16.5 16.5 Z" fill="#111"/></svg>
<div class="t" style="left:241px;top:99px;color:#141414;letter-spacing:0.25px">MOUNTAIN-VILLAGE</div>
<svg style="left:225px;top:125px" width="9" height="9"><rect x="0.5" y="0.5" width="8" height="8" fill="#fff" stroke="#a8a8a8"/><path d="M2 4.5 H7 M4.5 2 V7" stroke="#9a9a9a" stroke-width="1"/></svg>
<svg style="left:235px;top:129px" width="6" height="1"><path d="M0 0.5 H6" stroke="#a0a0a0" stroke-dasharray="1 2"/></svg>
<svg style="left:244px;top:121px" width="22" height="19"><path d="M1.5 17 V2.5 L3 1.5 H7.5 L9 3 V4.5 H16.5 V14.5 Z" fill="#fff" stroke="#111" stroke-width="2" stroke-linejoin="round"/></svg>
<div class="t" style="left:268px;top:123px;color:#141414;letter-spacing:0.25px">INNER</div>
<svg style="left:225px;top:149px" width="9" height="9"><rect x="0.5" y="0.5" width="8" height="8" fill="#fff" stroke="#a8a8a8"/><path d="M2 4.5 H7" stroke="#9a9a9a" stroke-width="1"/></svg>
<svg style="left:235px;top:153px" width="6" height="1"><path d="M0 0.5 H6" stroke="#a0a0a0" stroke-dasharray="1 2"/></svg>
<svg style="left:244px;top:145px" width="22" height="19"><path d="M1.5 16.5 V2.5 L3 1.5 H7.5 L9 3 V4.5 H16 L16.5 5.5 V8 H20 L16.5 16.5 Z" fill="#fff" stroke="#111" stroke-width="2" stroke-linejoin="round"/><path d="M1.5 16.5 L5.5 8.5 H20 L16.5 16.5 Z" fill="#111"/></svg>
<div class="t" style="left:268px;top:147px;color:#141414;letter-spacing:0.25px">BUILDINGS</div>
<svg style="left:258px;top:178px" width="10" height="1"><path d="M0 0.5 H10" stroke="#a0a0a0" stroke-dasharray="1 2"/></svg>
<div class="t" style="left:295px;top:171px;color:#141414;letter-spacing:0.6px;width:147px;overflow:hidden">chalet-building-01</div>
<svg style="left:258px;top:202px" width="10" height="1"><path d="M0 0.5 H10" stroke="#a0a0a0" stroke-dasharray="1 2"/></svg>
<div class="t" style="left:295px;top:195px;color:#141414;letter-spacing:0.6px;width:147px;overflow:hidden">chalet-building-01-B</div>
<svg style="left:258px;top:226px" width="10" height="1"><path d="M0 0.5 H10" stroke="#a0a0a0" stroke-dasharray="1 2"/></svg>
<div class="t" style="left:295px;top:219px;color:#141414;letter-spacing:0.6px;width:147px;overflow:hidden">chalet-building-02</div>
<svg style="left:258px;top:250px" width="10" height="1"><path d="M0 0.5 H10" stroke="#a0a0a0" stroke-dasharray="1 2"/></svg>
<div class="t" style="left:295px;top:243px;color:#141414;letter-spacing:0.6px;width:147px;overflow:hidden">chalet-building-02-mirr</div>
<svg style="left:258px;top:274px" width="10" height="1"><path d="M0 0.5 H10" stroke="#a0a0a0" stroke-dasharray="1 2"/></svg>
<div class="t" style="left:295px;top:267px;color:#141414;letter-spacing:0.6px;width:147px;overflow:hidden">chalet-building-03</div>
<svg style="left:258px;top:298px" width="10" height="1"><path d="M0 0.5 H10" stroke="#a0a0a0" stroke-dasharray="1 2"/></svg>
<div class="t" style="left:295px;top:291px;color:#fff;letter-spacing:0.6px;width:147px;overflow:hidden">chalet-building-04</div>
<svg style="left:258px;top:322px" width="10" height="1"><path d="M0 0.5 H10" stroke="#a0a0a0" stroke-dasharray="1 2"/></svg>
<div class="t" style="left:295px;top:315px;color:#141414;letter-spacing:0.6px;width:147px;overflow:hidden">chalet-building-05</div>
<svg style="left:258px;top:346px" width="10" height="1"><path d="M0 0.5 H10" stroke="#a0a0a0" stroke-dasharray="1 2"/></svg>
<div class="t" style="left:295px;top:339px;color:#141414;letter-spacing:0.6px;width:147px;overflow:hidden">chalet-building-06</div>
<svg style="left:258px;top:370px" width="10" height="1"><path d="M0 0.5 H10" stroke="#a0a0a0" stroke-dasharray="1 2"/></svg>
<div class="t" style="left:295px;top:363px;color:#141414;letter-spacing:0.6px;width:147px;overflow:hidden">chalet-building-07</div>
<svg style="left:258px;top:394px" width="10" height="1"><path d="M0 0.5 H10" stroke="#a0a0a0" stroke-dasharray="1 2"/></svg>
<div class="t" style="left:295px;top:387px;color:#141414;letter-spacing:0.6px;width:147px;overflow:hidden">chalet-building-08</div>
<svg style="left:225px;top:413px" width="9" height="9"><rect x="0.5" y="0.5" width="8" height="8" fill="#fff" stroke="#a8a8a8"/><path d="M2 4.5 H7 M4.5 2 V7" stroke="#9a9a9a" stroke-width="1"/></svg>
<svg style="left:235px;top:417px" width="6" height="1"><path d="M0 0.5 H6" stroke="#a0a0a0" stroke-dasharray="1 2"/></svg>
<svg style="left:244px;top:409px" width="22" height="19"><path d="M1.5 17 V2.5 L3 1.5 H7.5 L9 3 V4.5 H16.5 V14.5 Z" fill="#fff" stroke="#111" stroke-width="2" stroke-linejoin="round"/></svg>
<div class="t" style="left:268px;top:411px;color:#141414;letter-spacing:0.25px">BUILDINGS-SNOW</div>
<svg style="left:225px;top:437px" width="9" height="9"><rect x="0.5" y="0.5" width="8" height="8" fill="#fff" stroke="#a8a8a8"/><path d="M2 4.5 H7 M4.5 2 V7" stroke="#9a9a9a" stroke-width="1"/></svg>
<svg style="left:235px;top:441px" width="6" height="1"><path d="M0 0.5 H6" stroke="#a0a0a0" stroke-dasharray="1 2"/></svg>
<svg style="left:244px;top:433px" width="22" height="19"><path d="M1.5 17 V2.5 L3 1.5 H7.5 L9 3 V4.5 H16.5 V14.5 Z" fill="#fff" stroke="#111" stroke-width="2" stroke-linejoin="round"/></svg>
<div class="t" style="left:268px;top:435px;color:#141414;letter-spacing:0.25px">PROPS</div>
<svg style="left:225px;top:461px" width="9" height="9"><rect x="0.5" y="0.5" width="8" height="8" fill="#fff" stroke="#a8a8a8"/><path d="M2 4.5 H7 M4.5 2 V7" stroke="#9a9a9a" stroke-width="1"/></svg>
<svg style="left:235px;top:465px" width="6" height="1"><path d="M0 0.5 H6" stroke="#a0a0a0" stroke-dasharray="1 2"/></svg>
<svg style="left:244px;top:457px" width="22" height="19"><path d="M1.5 17 V2.5 L3 1.5 H7.5 L9 3 V4.5 H16.5 V14.5 Z" fill="#fff" stroke="#111" stroke-width="2" stroke-linejoin="round"/></svg>
<div class="t" style="left:268px;top:459px;color:#141414;letter-spacing:0.25px">PROPS-SNOW</div>
<svg style="left:225px;top:485px" width="9" height="9"><rect x="0.5" y="0.5" width="8" height="8" fill="#fff" stroke="#a8a8a8"/><path d="M2 4.5 H7 M4.5 2 V7" stroke="#9a9a9a" stroke-width="1"/></svg>
<svg style="left:235px;top:489px" width="6" height="1"><path d="M0 0.5 H6" stroke="#a0a0a0" stroke-dasharray="1 2"/></svg>
<svg style="left:244px;top:481px" width="22" height="19"><path d="M1.5 17 V2.5 L3 1.5 H7.5 L9 3 V4.5 H16.5 V14.5 Z" fill="#fff" stroke="#111" stroke-width="2" stroke-linejoin="round"/></svg>
<div class="t" style="left:268px;top:483px;color:#141414;letter-spacing:0.25px">FENCE</div>
<svg style="left:225px;top:509px" width="9" height="9"><rect x="0.5" y="0.5" width="8" height="8" fill="#fff" stroke="#a8a8a8"/><path d="M2 4.5 H7 M4.5 2 V7" stroke="#9a9a9a" stroke-width="1"/></svg>
<svg style="left:235px;top:513px" width="6" height="1"><path d="M0 0.5 H6" stroke="#a0a0a0" stroke-dasharray="1 2"/></svg>
<svg style="left:244px;top:505px" width="22" height="19"><path d="M1.5 17 V2.5 L3 1.5 H7.5 L9 3 V4.5 H16.5 V14.5 Z" fill="#fff" stroke="#111" stroke-width="2" stroke-linejoin="round"/></svg>
<div class="t" style="left:268px;top:507px;color:#141414;letter-spacing:0.25px">FENCE-SNOW</div>
<svg style="left:225px;top:533px" width="9" height="9"><rect x="0.5" y="0.5" width="8" height="8" fill="#fff" stroke="#a8a8a8"/><path d="M2 4.5 H7 M4.5 2 V7" stroke="#9a9a9a" stroke-width="1"/></svg>
<svg style="left:235px;top:537px" width="6" height="1"><path d="M0 0.5 H6" stroke="#a0a0a0" stroke-dasharray="1 2"/></svg>
<svg style="left:244px;top:529px" width="22" height="19"><path d="M1.5 17 V2.5 L3 1.5 H7.5 L9 3 V4.5 H16.5 V14.5 Z" fill="#fff" stroke="#111" stroke-width="2" stroke-linejoin="round"/></svg>
<div class="t" style="left:268px;top:531px;color:#141414;letter-spacing:0.25px">TREES</div>
<svg style="left:225px;top:557px" width="9" height="9"><rect x="0.5" y="0.5" width="8" height="8" fill="#fff" stroke="#a8a8a8"/><path d="M2 4.5 H7 M4.5 2 V7" stroke="#9a9a9a" stroke-width="1"/></svg>
<svg style="left:235px;top:561px" width="6" height="1"><path d="M0 0.5 H6" stroke="#a0a0a0" stroke-dasharray="1 2"/></svg>
<svg style="left:244px;top:553px" width="22" height="19"><path d="M1.5 17 V2.5 L3 1.5 H7.5 L9 3 V4.5 H16.5 V14.5 Z" fill="#fff" stroke="#111" stroke-width="2" stroke-linejoin="round"/></svg>
<div class="t" style="left:268px;top:555px;color:#141414;letter-spacing:0.25px">TREES-SNOW</div>
<svg style="left:225px;top:581px" width="9" height="9"><rect x="0.5" y="0.5" width="8" height="8" fill="#fff" stroke="#a8a8a8"/><path d="M2 4.5 H7 M4.5 2 V7" stroke="#9a9a9a" stroke-width="1"/></svg>
<svg style="left:235px;top:585px" width="6" height="1"><path d="M0 0.5 H6" stroke="#a0a0a0" stroke-dasharray="1 2"/></svg>
<svg style="left:244px;top:577px" width="22" height="19"><path d="M1.5 17 V2.5 L3 1.5 H7.5 L9 3 V4.5 H16.5 V14.5 Z" fill="#fff" stroke="#111" stroke-width="2" stroke-linejoin="round"/></svg>
<div class="t" style="left:268px;top:579px;color:#141414;letter-spacing:0.25px">WIKER</div>
<svg style="left:225px;top:605px" width="9" height="9"><rect x="0.5" y="0.5" width="8" height="8" fill="#fff" stroke="#a8a8a8"/><path d="M2 4.5 H7 M4.5 2 V7" stroke="#9a9a9a" stroke-width="1"/></svg>
<svg style="left:235px;top:609px" width="6" height="1"><path d="M0 0.5 H6" stroke="#a0a0a0" stroke-dasharray="1 2"/></svg>
<svg style="left:244px;top:601px" width="22" height="19"><path d="M1.5 17 V2.5 L3 1.5 H7.5 L9 3 V4.5 H16.5 V14.5 Z" fill="#fff" stroke="#111" stroke-width="2" stroke-linejoin="round"/></svg>
<div class="t" style="left:268px;top:603px;color:#141414;letter-spacing:0.25px">FARM</div>
<svg style="left:225px;top:629px" width="9" height="9"><rect x="0.5" y="0.5" width="8" height="8" fill="#fff" stroke="#a8a8a8"/><path d="M2 4.5 H7 M4.5 2 V7" stroke="#9a9a9a" stroke-width="1"/></svg>
<svg style="left:235px;top:633px" width="6" height="1"><path d="M0 0.5 H6" stroke="#a0a0a0" stroke-dasharray="1 2"/></svg>
<svg style="left:244px;top:625px" width="22" height="19"><path d="M1.5 17 V2.5 L3 1.5 H7.5 L9 3 V4.5 H16.5 V14.5 Z" fill="#fff" stroke="#111" stroke-width="2" stroke-linejoin="round"/></svg>
<div class="t" style="left:268px;top:627px;color:#141414;letter-spacing:0.25px">FARM-SNOW</div>
<svg style="left:225px;top:653px" width="9" height="9"><rect x="0.5" y="0.5" width="8" height="8" fill="#fff" stroke="#a8a8a8"/><path d="M2 4.5 H7 M4.5 2 V7" stroke="#9a9a9a" stroke-width="1"/></svg>
<svg style="left:235px;top:657px" width="6" height="1"><path d="M0 0.5 H6" stroke="#a0a0a0" stroke-dasharray="1 2"/></svg>
<svg style="left:244px;top:649px" width="22" height="19"><path d="M1.5 17 V2.5 L3 1.5 H7.5 L9 3 V4.5 H16.5 V14.5 Z" fill="#fff" stroke="#111" stroke-width="2" stroke-linejoin="round"/></svg>
<div class="t" style="left:268px;top:651px;color:#141414;letter-spacing:0.25px">PREFAB-FARM</div>
<svg style="left:198px;top:677px" width="9" height="9"><rect x="0.5" y="0.5" width="8" height="8" fill="#fff" stroke="#a8a8a8"/><path d="M2 4.5 H7 M4.5 2 V7" stroke="#9a9a9a" stroke-width="1"/></svg>
<svg style="left:208px;top:681px" width="6" height="1"><path d="M0 0.5 H6" stroke="#a0a0a0" stroke-dasharray="1 2"/></svg>
<svg style="left:217px;top:673px" width="22" height="19"><path d="M1.5 17 V2.5 L3 1.5 H7.5 L9 3 V4.5 H16.5 V14.5 Z" fill="#fff" stroke="#111" stroke-width="2" stroke-linejoin="round"/></svg>
<div class="t" style="left:241px;top:675px;color:#141414;letter-spacing:0.25px">ASSETS-BAKIN</div>
<svg style="left:198px;top:701px" width="9" height="9"><rect x="0.5" y="0.5" width="8" height="8" fill="#fff" stroke="#a8a8a8"/><path d="M2 4.5 H7 M4.5 2 V7" stroke="#9a9a9a" stroke-width="1"/></svg>
<svg style="left:208px;top:705px" width="6" height="1"><path d="M0 0.5 H6" stroke="#a0a0a0" stroke-dasharray="1 2"/></svg>
<svg style="left:217px;top:697px" width="22" height="19"><path d="M1.5 17 V2.5 L3 1.5 H7.5 L9 3 V4.5 H16.5 V14.5 Z" fill="#fff" stroke="#f4a6d0" stroke-width="2" stroke-linejoin="round"/></svg>
<div class="t" style="left:241px;top:699px;color:#e0208f;letter-spacing:0.25px">reserved</div>
<div style="left:268px;top:165px;width:24px;height:240px;background:#4d4d4d"></div>
<svg style="left:268px;top:165px" width="24" height="24"><path d="M4 14 L7 10 L11 5 L15 8 L18 12 L20 15 L17 19 L10 21 L5 18 Z" fill="#55433a"/><path d="M7 10 L11 5 L15 8 L12 12 Z" fill="#6a574b"/><path d="M6 16 L10 15 M14 14 L18 13" stroke="#8d7b5a" stroke-width="0.8"/><rect x="13" y="17" width="1.5" height="2.5" fill="#1a1a1a"/></svg>
<svg style="left:268px;top:189px" width="24" height="24"><path d="M4 14 L7 10 L11 5 L15 8 L18 12 L20 15 L17 19 L10 21 L5 18 Z" fill="#55433a"/><path d="M7 10 L11 5 L15 8 L12 12 Z" fill="#6a574b"/><path d="M6 16 L10 15 M14 14 L18 13" stroke="#8d7b5a" stroke-width="0.8"/><rect x="13" y="17" width="1.5" height="2.5" fill="#1a1a1a"/></svg>
<svg style="left:268px;top:213px" width="24" height="24"><path d="M4 14 L7 10 L11 5 L15 8 L18 12 L20 15 L17 19 L10 21 L5 18 Z" fill="#55433a"/><path d="M7 10 L11 5 L15 8 L12 12 Z" fill="#6a574b"/><path d="M6 16 L10 15 M14 14 L18 13" stroke="#8d7b5a" stroke-width="0.8"/><rect x="13" y="17" width="1.5" height="2.5" fill="#1a1a1a"/></svg>
<svg style="left:268px;top:237px" width="24" height="24"><path d="M4 14 L7 10 L11 5 L15 8 L18 12 L20 15 L17 19 L10 21 L5 18 Z" fill="#55433a"/><path d="M7 10 L11 5 L15 8 L12 12 Z" fill="#6a574b"/><path d="M6 16 L10 15 M14 14 L18 13" stroke="#8d7b5a" stroke-width="0.8"/><rect x="13" y="17" width="1.5" height="2.5" fill="#1a1a1a"/></svg>
<svg style="left:268px;top:261px" width="24" height="24"><path d="M4 14 L7 10 L11 5 L15 8 L18 12 L20 15 L17 19 L10 21 L5 18 Z" fill="#55433a"/><path d="M7 10 L11 5 L15 8 L12 12 Z" fill="#6a574b"/><path d="M6 16 L10 15 M14 14 L18 13" stroke="#8d7b5a" stroke-width="0.8"/><rect x="13" y="17" width="1.5" height="2.5" fill="#1a1a1a"/></svg>
<svg style="left:268px;top:285px" width="24" height="24"><path d="M4 14 L7 10 L11 5 L15 8 L18 12 L20 15 L17 19 L10 21 L5 18 Z" fill="#55433a"/><path d="M7 10 L11 5 L15 8 L12 12 Z" fill="#6a574b"/><path d="M6 16 L10 15 M14 14 L18 13" stroke="#8d7b5a" stroke-width="0.8"/><rect x="13" y="17" width="1.5" height="2.5" fill="#1a1a1a"/></svg>
<svg style="left:268px;top:309px" width="24" height="24"><path d="M4 14 L7 10 L11 5 L15 8 L18 12 L20 15 L17 19 L10 21 L5 18 Z" fill="#55433a"/><path d="M7 10 L11 5 L15 8 L12 12 Z" fill="#6a574b"/><path d="M6 16 L10 15 M14 14 L18 13" stroke="#8d7b5a" stroke-width="0.8"/><rect x="13" y="17" width="1.5" height="2.5" fill="#1a1a1a"/></svg>
<svg style="left:268px;top:333px" width="24" height="24"><path d="M4 14 L7 10 L11 5 L15 8 L18 12 L20 15 L17 19 L10 21 L5 18 Z" fill="#55433a"/><path d="M7 10 L11 5 L15 8 L12 12 Z" fill="#6a574b"/><path d="M6 16 L10 15 M14 14 L18 13" stroke="#8d7b5a" stroke-width="0.8"/><rect x="13" y="17" width="1.5" height="2.5" fill="#1a1a1a"/></svg>
<svg style="left:268px;top:357px" width="24" height="24"><path d="M4 14 L7 10 L11 5 L15 8 L18 12 L20 15 L17 19 L10 21 L5 18 Z" fill="#55433a"/><path d="M7 10 L11 5 L15 8 L12 12 Z" fill="#6a574b"/><path d="M6 16 L10 15 M14 14 L18 13" stroke="#8d7b5a" stroke-width="0.8"/><rect x="13" y="17" width="1.5" height="2.5" fill="#1a1a1a"/></svg>
<svg style="left:268px;top:381px" width="24" height="24"><path d="M4 14 L7 10 L11 5 L15 8 L18 12 L20 15 L17 19 L10 21 L5 18 Z" fill="#55433a"/><path d="M7 10 L11 5 L15 8 L12 12 Z" fill="#6a574b"/><path d="M6 16 L10 15 M14 14 L18 13" stroke="#8d7b5a" stroke-width="0.8"/><rect x="13" y="17" width="1.5" height="2.5" fill="#1a1a1a"/></svg>
<div style="left:179px;top:899px;width:265px;height:20px;background:#6a6a6a"></div>
<div class="hd" style="left:183px;top:902px;letter-spacing:0.45px">#Management Tags + Notes</div>
<div style="left:179px;top:919px;width:265px;height:116px;background:#fff;border:1px solid #a5a5a5;border-top:none"></div>
<div class="t" style="left:195px;top:925px;font-size:13px">#3D</div>
<div style="left:451px;top:60px;width:59px;height:25px;background:#f7f7f7;border:1px solid #e4e4e4;border-radius:4px"></div>
<div style="left:515px;top:60px;width:25px;height:25px;background:#f7f7f7;border:1px solid #e4e4e4;border-radius:4px"></div>
<div style="left:545px;top:60px;width:122px;height:25px;background:#f7f7f7;border:1px solid #e4e4e4;border-radius:4px"></div>
<svg style="left:458px;top:65px" width="16" height="16"><path d="M1.5 1 L14.5 8 L1.5 15 Z" fill="#5f5f5f"/></svg>
<div class="t" style="left:481px;top:67px;font-size:13px;letter-spacing:0.3px">Play</div>
<svg style="left:521px;top:65px" width="14" height="15"><rect x="1.5" y="0.5" width="3.2" height="14" rx="1.5" fill="#5f5f5f"/><rect x="8.7" y="0.5" width="3.2" height="14" rx="1.5" fill="#5f5f5f"/></svg>
<svg style="left:552px;top:62px" width="15" height="20"><rect x="1" y="1" width="13" height="18" rx="6.5" fill="none" stroke="#5f5f5f" stroke-width="1.8"/><path d="M5.2 2 V18 M9.8 2 V18 M1.5 7 H13.5 M1.5 13 H13.5" stroke="#5f5f5f" stroke-width="1.3"/></svg>
<div class="t" style="left:575px;top:67px;font-size:13px;letter-spacing:0.3px">View Collision</div>
<svg style="left:448px;top:91px" width="1194" height="807" viewBox="0 0 1194 807">
<rect width="1194" height="807" fill="#4b4b4b"/>
<path d="M38.2 436.2L0.0 488.3M79.5 432.4L0.0 590.8M119.0 428.8L16.8 807.0M156.7 425.3L142.1 807.0M192.9 422.0L267.3 807.0M227.6 418.8L392.6 807.0M260.9 415.7L517.8 807.0M292.8 412.8L643.0 807.0M323.6 410.0L768.1 807.0M353.1 407.3L893.3 807.0M381.6 404.6L1018.4 807.0M409.0 402.1L1143.6 807.0M435.4 399.7L1194.0 770.5M460.9 397.4L1194.0 719.3M485.6 395.1L1194.0 677.5M509.3 392.9L1194.0 642.8M532.3 390.8L1194.0 613.5M554.5 388.7L1194.0 588.4M576.0 386.8L1194.0 566.8M596.8 384.9L1194.0 547.8M617.0 383.0L1194.0 531.1M636.5 381.2L1194.0 516.3M655.5 379.5L1194.0 503.0M673.8 377.8L1194.0 491.1M691.7 376.1L1194.0 480.4M709.0 374.6L1194.0 470.6M725.8 373.0L1194.0 461.6M742.1 371.5L1194.0 453.5M758.0 370.0L1194.0 446.0M773.4 368.6L1194.0 439.0M-0.0 439.7L773.4 368.6M0.0 446.3L788.2 371.1M0.0 453.5L803.8 373.7M0.0 461.2L820.1 376.4M-0.0 469.6L837.3 379.3M0.0 478.8L855.4 382.4M0.0 488.8L874.6 385.6M0.0 499.8L894.8 388.9M-0.0 511.9L916.1 392.5M0.0 525.4L938.8 396.3M0.0 540.5L962.9 400.3M0.0 557.4L988.5 404.6M0.0 576.5L1015.8 409.2M0.0 598.4L1045.0 414.1M0.0 623.5L1076.3 419.3M0.0 652.8L1109.8 424.9M0.0 687.3L1145.9 431.0M0.0 728.5L1184.9 437.5M0.0 778.7L1194.0 453.6M111.7 807.0L1194.0 476.3M327.3 807.0L1194.0 505.4M542.8 807.0L1194.0 543.9M758.3 807.0L1194.0 597.1M973.8 807.0L1194.0 675.6M1189.1 807.0L1194.0 803.2" stroke="#a2a2a2" stroke-width="1" fill="none" shape-rendering="crispEdges"/>
<g transform="translate(-448 -91)"><path d="M891.0 242.0 L939.0 245.0 L940.0 252.0 L963.0 260.0 L990.0 267.0 L1102.0 274.0 L1133.0 266.0 L1145.0 262.0 L1173.0 263.0 L1173.0 295.0 L1164.0 296.0 L1169.0 329.0 L1180.0 355.0 L1200.0 382.0 L1224.0 402.0 L1244.0 404.0 L1269.0 404.0 L1269.0 431.0 L1253.0 440.0 L1267.0 473.0 L1287.0 513.0 L1317.0 540.0 L1353.0 562.0 L1354.0 578.0 L1340.0 580.0 L1313.0 582.0 L1312.0 682.0 L1312.0 696.0 L1265.0 700.0 L1265.0 718.0 L1266.0 759.0 L1199.0 789.0 L1184.0 791.0 L1131.0 807.0 L1116.0 819.0 L1051.0 839.0 L1039.0 845.0 L1024.0 837.0 L992.0 798.0 L988.0 793.0 L834.0 852.0 L807.0 854.0 L805.0 827.0 L758.0 725.0 L756.0 658.0 L754.0 616.0 L728.0 588.0 L726.0 567.0 L737.0 535.0 L739.0 500.0 L739.0 469.0 L721.0 468.0 L717.0 426.0 L769.0 426.0 L783.0 434.0 L825.0 438.0 L869.0 437.0 L868.0 413.0 L878.0 402.0 L892.0 374.0 L900.0 347.0 L906.0 313.0 L907.0 283.0 L894.0 281.0 Z" fill="#211a17" />
<clipPath id="c1"><path d="M940.0 440.0 L1110.0 430.0 L1110.0 650.0 L985.0 660.0 Z"/></clipPath>
<path d="M940.0 440.0 L1110.0 430.0 L1110.0 650.0 L985.0 660.0 Z" fill="#1e1714" />
<g clip-path="url(#c1)"><path d="M952 430 L952 670" stroke="#2c221e" stroke-width="17"/><path d="M954 430 L954 670" stroke="#362a25" stroke-width="6" opacity="0.8"/><path d="M976 430 L976 670" stroke="#2c221e" stroke-width="17"/><path d="M978 430 L978 670" stroke="#362a25" stroke-width="6" opacity="0.8"/><path d="M1000 430 L1000 670" stroke="#2c221e" stroke-width="17"/><path d="M1002 430 L1002 670" stroke="#362a25" stroke-width="6" opacity="0.8"/><path d="M1024 430 L1024 670" stroke="#2c221e" stroke-width="17"/><path d="M1026 430 L1026 670" stroke="#362a25" stroke-width="6" opacity="0.8"/><path d="M1048 430 L1048 670" stroke="#2c221e" stroke-width="17"/><path d="M1050 430 L1050 670" stroke="#362a25" stroke-width="6" opacity="0.8"/><path d="M1072 430 L1072 670" stroke="#2c221e" stroke-width="17"/><path d="M1074 430 L1074 670" stroke="#362a25" stroke-width="6" opacity="0.8"/><path d="M1096 430 L1096 670" stroke="#2c221e" stroke-width="17"/><path d="M1098 430 L1098 670" stroke="#362a25" stroke-width="6" opacity="0.8"/></g>
<clipPath id="c2"><path d="M917.5 283 L1164 283 L1164 296 C1170 340 1190 390 1244 409 L1240 424 L1153 433 L1015 437 L990 443 C940 410 921 350 917.5 283 Z"/></clipPath>
<path d="M917.5 283 L1164 283 L1164 296 C1170 340 1190 390 1244 409 L1240 424 L1153 433 L1015 437 L990 443 C940 410 921 350 917.5 283 Z" fill="#1c1614" />
<g clip-path="url(#c2)"><path d="M953.5 283.0 C955.7 349.0 974.1 403.8 1042.2 448.8 M975.5 283.0 C979.1 347.0 998.5 401.2 1066.8 446.2 M997.5 283.0 C1002.5 345.0 1022.8 398.8 1091.2 443.8 M1019.5 283.0 C1025.9 343.0 1047.0 396.2 1115.8 441.2 M1041.5 283.0 C1049.3 341.0 1071.3 393.8 1140.2 438.8 M1063.5 283.0 C1072.7 339.0 1095.7 391.2 1164.8 436.2 M1085.5 283.0 C1096.1 337.0 1120.0 388.8 1189.2 433.8 M1107.5 283.0 C1119.5 335.0 1144.2 386.2 1213.8 431.2 M1129.5 283.0 C1142.9 333.0 1168.5 383.8 1238.2 428.8 M1151.5 283.0 C1166.3 331.0 1192.8 381.2 1262.8 426.2" stroke="#332824" stroke-width="19" fill="none"/><path d="M953.5 283.0 C955.7 349.0 974.1 403.8 1042.2 448.8 M975.5 283.0 C979.1 347.0 998.5 401.2 1066.8 446.2 M997.5 283.0 C1002.5 345.0 1022.8 398.8 1091.2 443.8 M1019.5 283.0 C1025.9 343.0 1047.0 396.2 1115.8 441.2 M1041.5 283.0 C1049.3 341.0 1071.3 393.8 1140.2 438.8 M1063.5 283.0 C1072.7 339.0 1095.7 391.2 1164.8 436.2 M1085.5 283.0 C1096.1 337.0 1120.0 388.8 1189.2 433.8 M1107.5 283.0 C1119.5 335.0 1144.2 386.2 1213.8 431.2 M1129.5 283.0 C1142.9 333.0 1168.5 383.8 1238.2 428.8 M1151.5 283.0 C1166.3 331.0 1192.8 381.2 1262.8 426.2" transform="translate(-3 0)" stroke="#3d302c" stroke-width="7" fill="none" opacity="0.8"/></g>
<path d="M1144 283 L1164 296 C1170 340 1190 390 1244 409 L1236 416 C1185 395 1152 345 1144 290 Z" fill="#2f2420" />
<path d="M1164 296 C1170 340 1190 390 1244 409" fill="none" stroke="#3e312c" stroke-width="3"/>
<path d="M917.5 283.0 C921.0 350.0 940.0 410.0 990.0 443.0 L1015 437 L1015.0 437.0 C962.0 405.0 944.0 350.0 942.5 283.0 Z" fill="#2f2420" />
<path d="M921.0 283.0 C925.0 350.0 944.0 408.0 994.0 441.0" fill="none" stroke="#3e312c" stroke-width="3"/>
<path d="M898.0 354.0 L920.0 354.0 L920.0 372.0 L898.0 372.0 Z" fill="#2a201c" />
<path d="M887.0 386.0 L927.0 386.0 L927.0 404.0 L887.0 404.0 Z" fill="#2a201c" />
<path d="M872.0 407.0 L942.0 407.0 L942.0 425.0 L872.0 425.0 Z" fill="#2a201c" />
<path d="M901.0 355.0 L904.0 355.0 L901.0 371.0 L898.0 371.0 Z" fill="#786a4b" />
<path d="M912.0 355.0 L915.0 355.0 L919.0 372.0 L916.0 372.0 Z" fill="#786a4b" />
<path d="M891.0 387.0 L894.0 387.0 L890.0 401.0 L887.0 401.0 Z" fill="#786a4b" />
<path d="M922.0 389.0 L925.0 389.0 L931.0 408.0 L928.0 408.0 Z" fill="#786a4b" />
<path d="M878.0 408.0 L882.0 408.0 L877.0 422.0 L873.0 422.0 Z" fill="#786a4b" />
<path d="M936.0 419.0 L940.0 419.0 L948.0 440.0 L944.0 440.0 Z" fill="#786a4b" />
<path d="M887.0 429.0 L902.0 429.0 L902.0 434.0 L887.0 434.0 Z" fill="#786a4b" />
<path d="M898.0 241.0 L939.0 245.0 L940.0 252.0 L963.0 260.0 L990.0 267.0 L1102.0 274.0 L1133.0 266.0 L1145.0 262.0 L1145.0 294.0 L1143.0 293.0 L940.0 284.0 L906.0 282.0 L898.0 282.0 Z" fill="#2f2521" />
<path d="M892.0 242.0 L898.0 241.0 L898.0 282.0 L894.0 281.0 Z" fill="#8d7c59" />
<path d="M1145.0 262.0 L1173.0 263.0 L1173.0 295.0 L1145.0 294.0 Z" fill="#2a211d" />
<path d="M1138.0 262.0 L1145.0 262.0 L1145.0 270.0 L1140.0 271.0 Z" fill="#786a4b" />
<path d="M1015.0 437.0 L1153.0 431.0 L1153.0 440.0 L1017.0 447.0 Z" fill="#8d7c59" />
<path d="M990.0 438.0 L1016.0 436.0 L1012.0 465.0 L989.0 467.0 Z" fill="#8d7c59" />
<path d="M1244.0 404.0 L1269.0 404.0 L1269.0 431.0 L1256.0 444.0 L1240.0 424.0 Z" fill="#261e1b" />
<path d="M1209.0 428.0 L1238.0 423.0 L1238.0 433.0 L1209.0 440.0 Z" fill="#8d7c59" />
<path d="M1242.0 422.0 L1258.0 423.0 L1253.0 444.0 L1237.0 443.0 Z" fill="#8d7c59" />
<clipPath id="c3"><path d="M739 469 L950 455 C952 560 965 625 990 650 L953 650 L821 674 L788 676 C765 635 744 565 739 469 Z"/></clipPath>
<path d="M739 469 L950 455 C952 560 965 625 990 650 L953 650 L821 674 L788 676 C765 635 744 565 739 469 Z" fill="#1c1614" />
<g clip-path="url(#c3)"><path d="M786.8 440.0 C788.8 569.2 804.6 638.8 839.6 682.0 M816.5 440.0 C818.5 567.5 833.8 636.2 868.8 678.0 M846.2 440.0 C848.2 565.8 862.9 633.8 897.9 674.0 M875.8 440.0 C877.8 564.2 892.1 631.2 927.1 670.0 M905.5 440.0 C907.5 562.5 921.2 628.8 956.2 666.0 M935.2 440.0 C937.2 560.8 950.4 626.2 985.4 662.0" stroke="#332824" stroke-width="26" fill="none"/><path d="M786.8 440.0 C788.8 569.2 804.6 638.8 839.6 682.0 M816.5 440.0 C818.5 567.5 833.8 636.2 868.8 678.0 M846.2 440.0 C848.2 565.8 862.9 633.8 897.9 674.0 M875.8 440.0 C877.8 564.2 892.1 631.2 927.1 670.0 M905.5 440.0 C907.5 562.5 921.2 628.8 956.2 666.0 M935.2 440.0 C937.2 560.8 950.4 626.2 985.4 662.0" transform="translate(-5 0)" stroke="#3d302c" stroke-width="9" fill="none" opacity="0.8"/></g>
<path d="M739.0 469.0 C744.0 565.0 765.0 635.0 788.0 676.0 L821 674 L821.0 674.0 C790.0 640.0 774.0 570.0 772.0 466.0 Z" fill="#2f2420" />
<path d="M744.0 469.0 C749.0 562.0 770.0 636.0 795.0 676.0" fill="none" stroke="#3e312c" stroke-width="3"/>
<path d="M950.0 455.0 C952.0 560.0 965.0 625.0 990.0 650.0" fill="none" stroke="#1a1412" stroke-width="3"/>
<path d="M769.0 426.0 L783.0 434.0 L825.0 438.0 L869.0 437.0 L955.0 437.0 L955.0 456.0 L783.0 460.0 L769.0 467.0 Z" fill="#2f2521" />
<path d="M717.0 426.0 L769.0 426.0 L769.0 467.0 L721.0 468.0 Z" fill="#2a211d" />
<path d="M717.0 428.0 L722.0 428.0 L725.0 467.0 L721.0 468.0 Z" fill="#8d7c59" />
<path d="M983.0 577.0 L1004.0 575.0 L1004.0 581.0 L983.0 583.0 Z" fill="#786a4b" />
<path d="M981.0 597.0 L1006.0 595.0 L1006.0 601.0 L981.0 603.0 Z" fill="#786a4b" />
<path d="M727.0 570.0 L737.0 568.0 L739.0 584.0 L729.0 586.0 Z" fill="#241c19" />
<path d="M750.0 612.0 L760.0 610.0 L762.0 626.0 L752.0 628.0 Z" fill="#241c19" />
<path d="M752.0 650.0 L762.0 648.0 L764.0 664.0 L754.0 666.0 Z" fill="#241c19" />
<path d="M788.0 668.0 L821.0 664.0 L822.0 694.0 L789.0 698.0 Z" fill="#8d7c59" />
<path d="M821.0 666.0 L953.0 644.0 L953.0 654.0 L821.0 675.0 Z" fill="#8d7c59" />
<path d="M953.0 639.0 L981.0 637.0 L985.0 655.0 L955.0 658.0 Z" fill="#8d7c59" />
<clipPath id="c4"><path d="M805.0 690.0 L985.0 656.0 L988.0 792.0 L834.0 852.0 L807.0 854.0 Z"/></clipPath>
<path d="M805.0 690.0 L985.0 656.0 L988.0 792.0 L834.0 852.0 L807.0 854.0 Z" fill="#1d1714" />
<g clip-path="url(#c4)"><path d="M850 640 L851 870" stroke="#2e2420" stroke-width="25"/><path d="M852 640 L853 870" stroke="#382c27" stroke-width="9" opacity="0.8"/><path d="M880 640 L881 870" stroke="#2e2420" stroke-width="25"/><path d="M882 640 L883 870" stroke="#382c27" stroke-width="9" opacity="0.8"/><path d="M910 640 L911 870" stroke="#2e2420" stroke-width="25"/><path d="M912 640 L913 870" stroke="#382c27" stroke-width="9" opacity="0.8"/><path d="M940 640 L941 870" stroke="#2e2420" stroke-width="25"/><path d="M942 640 L943 870" stroke="#382c27" stroke-width="9" opacity="0.8"/><path d="M970 640 L971 870" stroke="#2e2420" stroke-width="25"/><path d="M972 640 L973 870" stroke="#382c27" stroke-width="9" opacity="0.8"/></g>
<path d="M805.0 683.0 L830.0 680.0 L834.0 852.0 L807.0 854.0 Z" fill="#261e1b" />
<path d="M807.0 835.0 L834.0 833.0 L834.0 840.0 L807.0 842.0 Z" fill="#786a4b" />
<path d="M807.0 846.0 L834.0 844.0 L834.0 850.0 L807.0 852.0 Z" fill="#786a4b" />
<path d="M757.0 700.0 L765.0 703.0 L765.0 708.0 L757.0 705.0 Z" fill="#786a4b" />
<clipPath id="c5"><path d="M756.0 658.0 L805.0 690.0 L807.0 854.0 L758.0 725.0 Z"/></clipPath>
<path d="M756.0 658.0 L805.0 690.0 L807.0 854.0 L758.0 725.0 Z" fill="#1a1412" />
<g clip-path="url(#c5)"><path d="M760 640 L764 870" stroke="#30251f" stroke-width="2.5"/><path d="M766 640 L770 870" stroke="#30251f" stroke-width="2.5"/><path d="M772 640 L776 870" stroke="#30251f" stroke-width="2.5"/><path d="M778 640 L782 870" stroke="#30251f" stroke-width="2.5"/><path d="M784 640 L788 870" stroke="#30251f" stroke-width="2.5"/><path d="M790 640 L794 870" stroke="#30251f" stroke-width="2.5"/><path d="M796 640 L800 870" stroke="#30251f" stroke-width="2.5"/><path d="M802 640 L806 870" stroke="#30251f" stroke-width="2.5"/></g>
<path d="M834.0 843.0 L988.0 785.0 L988.0 793.0 L834.0 852.0 Z" fill="#221b19" />
<clipPath id="c6"><path d="M1171.0 520.0 L1090.0 650.0 L1285.0 620.0 Z"/></clipPath>
<path d="M1171.0 520.0 L1090.0 650.0 L1285.0 620.0 Z" fill="#1e1815" />
<g clip-path="url(#c6)"><path d="M1080 500 L1290 530" stroke="#332723" stroke-width="10"/><path d="M1080 514 L1290 544" stroke="#332723" stroke-width="10"/><path d="M1080 528 L1290 558" stroke="#332723" stroke-width="10"/><path d="M1080 542 L1290 572" stroke="#332723" stroke-width="10"/><path d="M1080 556 L1290 586" stroke="#332723" stroke-width="10"/><path d="M1080 570 L1290 600" stroke="#332723" stroke-width="10"/><path d="M1080 584 L1290 614" stroke="#332723" stroke-width="10"/><path d="M1080 598 L1290 628" stroke="#332723" stroke-width="10"/><path d="M1080 612 L1290 642" stroke="#332723" stroke-width="10"/><path d="M1080 626 L1290 656" stroke="#332723" stroke-width="10"/><path d="M1080 640 L1290 670" stroke="#332723" stroke-width="10"/><path d="M1080 654 L1290 684" stroke="#332723" stroke-width="10"/></g>
<clipPath id="c7"><path d="M1011.0 687.0 L1110.0 645.0 L1280.0 612.0 L1265.0 759.0 L1199.0 789.0 L1131.0 807.0 L1051.0 839.0 L1024.0 837.0 L1016.0 700.0 Z"/></clipPath>
<path d="M1011.0 687.0 L1110.0 645.0 L1280.0 612.0 L1265.0 759.0 L1199.0 789.0 L1131.0 807.0 L1051.0 839.0 L1024.0 837.0 L1016.0 700.0 Z" fill="#1d1714" />
<g clip-path="url(#c7)"><path d="M1035 600 L1036 860" stroke="#2e2420" stroke-width="21"/><path d="M1037 600 L1038 860" stroke="#382c27" stroke-width="8" opacity="0.8"/><path d="M1061 600 L1062 860" stroke="#2e2420" stroke-width="21"/><path d="M1063 600 L1064 860" stroke="#382c27" stroke-width="8" opacity="0.8"/><path d="M1087 600 L1088 860" stroke="#2e2420" stroke-width="21"/><path d="M1089 600 L1090 860" stroke="#382c27" stroke-width="8" opacity="0.8"/><path d="M1113 600 L1114 860" stroke="#2e2420" stroke-width="21"/><path d="M1115 600 L1116 860" stroke="#382c27" stroke-width="8" opacity="0.8"/><path d="M1139 600 L1140 860" stroke="#2e2420" stroke-width="21"/><path d="M1141 600 L1142 860" stroke="#382c27" stroke-width="8" opacity="0.8"/><path d="M1165 600 L1166 860" stroke="#2e2420" stroke-width="21"/><path d="M1167 600 L1168 860" stroke="#382c27" stroke-width="8" opacity="0.8"/><path d="M1191 600 L1192 860" stroke="#2e2420" stroke-width="21"/><path d="M1193 600 L1194 860" stroke="#382c27" stroke-width="8" opacity="0.8"/><path d="M1217 600 L1218 860" stroke="#2e2420" stroke-width="21"/><path d="M1219 600 L1220 860" stroke="#382c27" stroke-width="8" opacity="0.8"/><path d="M1243 600 L1244 860" stroke="#2e2420" stroke-width="21"/><path d="M1245 600 L1246 860" stroke="#382c27" stroke-width="8" opacity="0.8"/><path d="M1269 600 L1270 860" stroke="#2e2420" stroke-width="21"/><path d="M1271 600 L1272 860" stroke="#382c27" stroke-width="8" opacity="0.8"/></g>
<path d="M1104.0 660.0 L1212.0 640.0 L1214.0 655.0 L1108.0 677.0 Z" fill="#241c19" />
<path d="M1134.0 682.0 L1188.0 672.0 L1185.0 792.0 L1134.0 807.0 Z" fill="#1c1919" />
<path d="M1138 696 L1186 686" stroke="#2f2826" stroke-width="5"/><path d="M1138 710 L1186 700" stroke="#2f2826" stroke-width="5"/><path d="M1138 724 L1186 714" stroke="#2f2826" stroke-width="5"/><path d="M1138 738 L1186 728" stroke="#2f2826" stroke-width="5"/><path d="M1138 752 L1186 742" stroke="#2f2826" stroke-width="5"/><path d="M1138 766 L1186 756" stroke="#2f2826" stroke-width="5"/><path d="M1138 780 L1186 770" stroke="#2f2826" stroke-width="5"/>
<path d="M1116.0 678.0 L1134.0 676.0 L1134.0 815.0 L1116.0 819.0 Z" fill="#241c19" />
<path d="M1188.0 668.0 L1204.0 665.0 L1199.0 789.0 L1185.0 792.0 Z" fill="#241c19" />
<path d="M1104.0 662.0 L1111.0 660.0 L1113.0 684.0 L1106.0 686.0 Z" fill="#8d7c59" />
<path d="M1024.0 826.0 L1051.0 829.0 L1051.0 835.0 L1024.0 832.0 Z" fill="#786a4b" />
<path d="M1024.0 836.0 L1051.0 838.0 L1051.0 843.0 L1024.0 841.0 Z" fill="#786a4b" />
<path d="M1255.0 738.0 L1266.0 737.0 L1266.0 743.0 L1255.0 744.0 Z" fill="#786a4b" />
<path d="M1255.0 748.0 L1266.0 747.0 L1266.0 753.0 L1255.0 754.0 Z" fill="#786a4b" />
<path d="M1051.0 832.0 L1131.0 800.0 L1131.0 807.0 L1051.0 839.0 Z" fill="#221b19" />
<path d="M1199.0 782.0 L1265.0 752.0 L1265.0 759.0 L1199.0 789.0 Z" fill="#221b19" />
<path d="M985.0 648.0 L1011.0 650.0 L1024.0 837.0 L992.0 798.0 L988.0 793.0 Z" fill="#241c19" />
<path d="M1010.0 650.0 L1030.0 655.0 L1038.0 700.0 L1016.0 700.0 Z" fill="#241c19" />
<clipPath id="c8"><path d="M1270.0 598.0 L1313.0 582.0 L1312.0 690.0 L1265.0 700.0 Z"/></clipPath>
<path d="M1270.0 598.0 L1313.0 582.0 L1312.0 690.0 L1265.0 700.0 Z" fill="#1d1714" />
<g clip-path="url(#c8)"><path d="M1274 570 L1274 710" stroke="#2a201c" stroke-width="9"/><path d="M1286 570 L1286 710" stroke="#2a201c" stroke-width="9"/><path d="M1298 570 L1298 710" stroke="#2a201c" stroke-width="9"/><path d="M1310 570 L1310 710" stroke="#2a201c" stroke-width="9"/></g>
<path d="M1305.0 662.0 L1313.0 661.0 L1313.0 666.0 L1305.0 667.0 Z" fill="#786a4b" />
<path d="M1305.0 678.0 L1313.0 677.0 L1313.0 683.0 L1305.0 684.0 Z" fill="#786a4b" />
<clipPath id="c9"><path d="M1238.0 446.0 C1262.0 500.0 1300.0 545.0 1354.0 562.0 L1354 578 L1281 590 L1281.0 584.0 C1235.0 580.0 1205.0 540.0 1190.0 470.0 Z"/></clipPath>
<path d="M1238.0 446.0 C1262.0 500.0 1300.0 545.0 1354.0 562.0 L1354 578 L1281 590 L1281.0 584.0 C1235.0 580.0 1205.0 540.0 1190.0 470.0 Z" fill="#1c1614" />
<g clip-path="url(#c9)"><path d="M1194.8 430.0 C1210.7 536.0 1241.5 576.5 1292.5 587.2 M1204.4 430.0 C1222.1 528.0 1254.5 569.5 1307.5 581.6 M1214.0 430.0 C1233.5 520.0 1267.5 562.5 1322.5 576.0 M1223.6 430.0 C1244.9 512.0 1280.5 555.5 1337.5 570.4 M1233.2 430.0 C1256.3 504.0 1293.5 548.5 1352.5 564.8" stroke="#332824" stroke-width="11" fill="none"/><path d="M1194.8 430.0 C1210.7 536.0 1241.5 576.5 1292.5 587.2 M1204.4 430.0 C1222.1 528.0 1254.5 569.5 1307.5 581.6 M1214.0 430.0 C1233.5 520.0 1267.5 562.5 1322.5 576.0 M1223.6 430.0 C1244.9 512.0 1280.5 555.5 1337.5 570.4 M1233.2 430.0 C1256.3 504.0 1293.5 548.5 1352.5 564.8" transform="translate(2 -1)" stroke="#3d302c" stroke-width="4" fill="none" opacity="0.8"/></g>
<path d="M1190.0 470.0 C1205.0 540.0 1235.0 580.0 1281.0 584.0 L1290 578 L1290.0 578.0 C1245.0 572.0 1215.0 535.0 1200.0 470.0 Z" fill="#2f2420" />
<path d="M1279.0 568.0 L1336.0 560.0 L1338.0 572.0 L1281.0 582.0 Z" fill="#8d7c59" />
<path d="M1338.0 558.0 L1354.0 562.0 L1352.0 578.0 L1338.0 580.0 Z" fill="#8d7c59" />
<clipPath id="c10"><path d="M1101.0 456.0 C1090.0 540.0 1040.0 610.0 960.0 646.0 L982 666 L1011 687 L1011.0 687.0 C1110.0 650.0 1170.0 590.0 1182.0 498.0 L1188 450 Z"/></clipPath>
<path d="M1101.0 456.0 C1090.0 540.0 1040.0 610.0 960.0 646.0 L982 666 L1011 687 L1011.0 687.0 C1110.0 650.0 1170.0 590.0 1182.0 498.0 L1188 450 Z" fill="#1c1614" />
<g clip-path="url(#c10)"><path d="M1111.8 420.0 C1098.0 544.5 1046.5 614.0 959.5 654.0 M1127.4 420.0 C1114.0 553.5 1059.5 622.0 968.5 662.0 M1143.0 420.0 C1130.0 562.5 1072.5 630.0 977.5 670.0 M1158.6 420.0 C1146.0 571.5 1085.5 638.0 986.5 678.0 M1174.2 420.0 C1162.0 580.5 1098.5 646.0 995.5 686.0" stroke="#332824" stroke-width="13" fill="none"/><path d="M1111.8 420.0 C1098.0 544.5 1046.5 614.0 959.5 654.0 M1127.4 420.0 C1114.0 553.5 1059.5 622.0 968.5 662.0 M1143.0 420.0 C1130.0 562.5 1072.5 630.0 977.5 670.0 M1158.6 420.0 C1146.0 571.5 1085.5 638.0 986.5 678.0 M1174.2 420.0 C1162.0 580.5 1098.5 646.0 995.5 686.0" transform="translate(2 -2)" stroke="#3d302c" stroke-width="5" fill="none" opacity="0.8"/></g>
<path d="M1182.0 498.0 C1170.0 590.0 1110.0 650.0 1011.0 687.0 L1014 696 L1014.0 696.0 C1118.0 656.0 1179.0 592.0 1190.0 492.0 Z" fill="#231c1a" />
<path d="M1101.0 456.0 C1090.0 540.0 1040.0 610.0 960.0 646.0" fill="none" stroke="#3e312c" stroke-width="4"/>
<path d="M960.0 644.0 L982.0 646.0 L983.0 668.0 L962.0 668.0 Z" fill="#8d7c59" />
<path d="M984.0 652.0 L1000.0 658.0 L1010.0 692.0 L993.0 688.0 Z" fill="#786a4b" />
<path d="M1153.0 432.0 L1188.0 429.0 L1188.0 462.0 L1157.0 462.0 Z" fill="#241c19" />
<path d="M1187.0 431.0 L1209.0 431.0 L1209.0 475.0 L1187.0 476.0 Z" fill="#8d7c59" />
<path d="M1156.0 564.0 L1170.0 554.0 L1174.0 562.0 L1160.0 572.0 Z" fill="#1e1815" />
<path d="M1162.0 568.0 L1174.0 559.0 L1177.0 565.0 L1165.0 574.0 Z" fill="#8d7c59" />
<path d="M1192.0 547.0 L1206.0 557.0 L1202.0 565.0 L1188.0 555.0 Z" fill="#1e1815" />
<path d="M1202.0 553.0 L1214.0 561.0 L1210.0 568.0 L1198.0 560.0 Z" fill="#8d7c59" />
<path d="M1124.0 604.0 L1138.0 594.0 L1142.0 602.0 L1128.0 612.0 Z" fill="#1e1815" />
<path d="M1130.0 608.0 L1142.0 599.0 L1145.0 605.0 L1133.0 614.0 Z" fill="#8d7c59" />
<path d="M1219.0 576.0 L1233.0 586.0 L1229.0 594.0 L1215.0 584.0 Z" fill="#1e1815" />
<path d="M1229.0 582.0 L1241.0 590.0 L1237.0 597.0 L1225.0 589.0 Z" fill="#8d7c59" />
<path d="M1079.0 646.0 L1093.0 636.0 L1097.0 644.0 L1083.0 654.0 Z" fill="#1e1815" />
<path d="M1085.0 650.0 L1097.0 641.0 L1100.0 647.0 L1088.0 656.0 Z" fill="#8d7c59" />
<path d="M1249.0 600.0 L1263.0 610.0 L1259.0 618.0 L1245.0 608.0 Z" fill="#1e1815" />
<path d="M1259.0 606.0 L1271.0 614.0 L1267.0 621.0 L1255.0 613.0 Z" fill="#8d7c59" /></g>
</svg>
<div style="left:448px;top:898px;width:1194px;height:4px;background:#fff"></div>
<div style="left:448px;top:902px;width:1194px;height:21px;background:#6a6a6a"></div>
<div class="hd" style="left:452px;top:906px;">Motions</div>
<div style="left:448px;top:923px;width:1194px;height:112px;background:#fff;border:1px solid #a5a5a5;border-top:none"></div>
<div style="left:1642px;top:91px;width:4px;height:944px;background:#fff"></div>
<div style="left:1646px;top:55px;width:269px;height:21px;background:#c28b00"></div>
<div class="t" style="left:1650px;top:58px;color:#f8f0d8;letter-spacing:0.3px;font-size:13.5px">Name</div>
<div style="left:1646px;top:75px;width:269px;height:21px;background:#f6f0d6;border:1px solid #a9a9a9;border-top:none;border-left:1px solid #b4b4b4"></div>
<div class="t" style="left:1650px;top:79px;letter-spacing:0.3px">chalet-building-04</div>
<svg style="left:1898px;top:79px" width="14" height="13"><path d="M3 8 L9 2 L12.5 5.5 L6.5 11.5 Z" fill="#8e8e8e"/><path d="M3 8 L1.5 12 L6.5 11.5" fill="none" stroke="#8e8e8e" stroke-width="1.3"/></svg>
<div style="left:1646px;top:96px;width:252px;height:939px;background:#f6f0d6;border-left:1px solid #a9a9a9;border-right:1px solid #a9a9a9"></div>
<div style="left:1649px;top:99px;width:246px;height:29px;background:#c28b00"></div>
<svg style="left:1653px;top:106px" width="14" height="14"><circle cx="7" cy="7" r="6.5" fill="#fff"/><path d="M3.8 5.8 L7 9 L10.2 5.8" fill="none" stroke="#c28b00" stroke-width="2"/></svg>
<div class="t" style="left:1670px;top:105px;color:#f8f0d8;letter-spacing:0.4px">Basic</div>
<div style="left:1647px;top:130px;width:250px;height:20px;background:#e8e8e8"></div>
<div style="left:1646px;top:130px;width:252px;height:1px;background:#a9a9a9"></div>
<div style="left:1646px;top:150px;width:252px;height:1px;background:#a9a9a9"></div>
<div style="left:1746px;top:130px;width:1px;height:20px;background:#a9a9a9"></div>
<div class="t" style="left:1650px;top:134px;color:#a0a0a0;letter-spacing:0.4px">Graphic Name</div>
<div class="t" style="left:1750px;top:134px;color:#a0a0a0;letter-spacing:0.4px">chalet-building-04</div>
<div style="left:1647px;top:150px;width:250px;height:133px;background:#f6f0d6"></div>
<div style="left:1646px;top:150px;width:252px;height:1px;background:#a9a9a9"></div>
<div style="left:1646px;top:283px;width:252px;height:1px;background:#a9a9a9"></div>
<div style="left:1746px;top:150px;width:1px;height:133px;background:#a9a9a9"></div>
<div class="t" style="left:1650px;top:211px;color:#141414;letter-spacing:0.4px">Graphic</div>
<div style="left:1747px;top:153px;width:128px;height:128px;background:#4b4b4b;overflow:hidden"><svg width="128" height="128" style="filter:brightness(1.45) saturate(1.1)"><g transform="translate(-72.6 7.7) scale(0.1319 0.1196)"><path d="M891.0 242.0 L939.0 245.0 L940.0 252.0 L963.0 260.0 L990.0 267.0 L1102.0 274.0 L1133.0 266.0 L1145.0 262.0 L1173.0 263.0 L1173.0 295.0 L1164.0 296.0 L1169.0 329.0 L1180.0 355.0 L1200.0 382.0 L1224.0 402.0 L1244.0 404.0 L1269.0 404.0 L1269.0 431.0 L1253.0 440.0 L1267.0 473.0 L1287.0 513.0 L1317.0 540.0 L1353.0 562.0 L1354.0 578.0 L1340.0 580.0 L1313.0 582.0 L1312.0 682.0 L1312.0 696.0 L1265.0 700.0 L1265.0 718.0 L1266.0 759.0 L1199.0 789.0 L1184.0 791.0 L1131.0 807.0 L1116.0 819.0 L1051.0 839.0 L1039.0 845.0 L1024.0 837.0 L992.0 798.0 L988.0 793.0 L834.0 852.0 L807.0 854.0 L805.0 827.0 L758.0 725.0 L756.0 658.0 L754.0 616.0 L728.0 588.0 L726.0 567.0 L737.0 535.0 L739.0 500.0 L739.0 469.0 L721.0 468.0 L717.0 426.0 L769.0 426.0 L783.0 434.0 L825.0 438.0 L869.0 437.0 L868.0 413.0 L878.0 402.0 L892.0 374.0 L900.0 347.0 L906.0 313.0 L907.0 283.0 L894.0 281.0 Z" fill="#211a17" />
<clipPath id="t1"><path d="M940.0 440.0 L1110.0 430.0 L1110.0 650.0 L985.0 660.0 Z"/></clipPath>
<path d="M940.0 440.0 L1110.0 430.0 L1110.0 650.0 L985.0 660.0 Z" fill="#1e1714" />
<g clip-path="url(#t1)"><path d="M952 430 L952 670" stroke="#2c221e" stroke-width="17"/><path d="M954 430 L954 670" stroke="#362a25" stroke-width="6" opacity="0.8"/><path d="M976 430 L976 670" stroke="#2c221e" stroke-width="17"/><path d="M978 430 L978 670" stroke="#362a25" stroke-width="6" opacity="0.8"/><path d="M1000 430 L1000 670" stroke="#2c221e" stroke-width="17"/><path d="M1002 430 L1002 670" stroke="#362a25" stroke-width="6" opacity="0.8"/><path d="M1024 430 L1024 670" stroke="#2c221e" stroke-width="17"/><path d="M1026 430 L1026 670" stroke="#362a25" stroke-width="6" opacity="0.8"/><path d="M1048 430 L1048 670" stroke="#2c221e" stroke-width="17"/><path d="M1050 430 L1050 670" stroke="#362a25" stroke-width="6" opacity="0.8"/><path d="M1072 430 L1072 670" stroke="#2c221e" stroke-width="17"/><path d="M1074 430 L1074 670" stroke="#362a25" stroke-width="6" opacity="0.8"/><path d="M1096 430 L1096 670" stroke="#2c221e" stroke-width="17"/><path d="M1098 430 L1098 670" stroke="#362a25" stroke-width="6" opacity="0.8"/></g>
<clipPath id="t2"><path d="M917.5 283 L1164 283 L1164 296 C1170 340 1190 390 1244 409 L1240 424 L1153 433 L1015 437 L990 443 C940 410 921 350 917.5 283 Z"/></clipPath>
<path d="M917.5 283 L1164 283 L1164 296 C1170 340 1190 390 1244 409 L1240 424 L1153 433 L1015 437 L990 443 C940 410 921 350 917.5 283 Z" fill="#1c1614" />
<g clip-path="url(#t2)"><path d="M953.5 283.0 C955.7 349.0 974.1 403.8 1042.2 448.8 M975.5 283.0 C979.1 347.0 998.5 401.2 1066.8 446.2 M997.5 283.0 C1002.5 345.0 1022.8 398.8 1091.2 443.8 M1019.5 283.0 C1025.9 343.0 1047.0 396.2 1115.8 441.2 M1041.5 283.0 C1049.3 341.0 1071.3 393.8 1140.2 438.8 M1063.5 283.0 C1072.7 339.0 1095.7 391.2 1164.8 436.2 M1085.5 283.0 C1096.1 337.0 1120.0 388.8 1189.2 433.8 M1107.5 283.0 C1119.5 335.0 1144.2 386.2 1213.8 431.2 M1129.5 283.0 C1142.9 333.0 1168.5 383.8 1238.2 428.8 M1151.5 283.0 C1166.3 331.0 1192.8 381.2 1262.8 426.2" stroke="#332824" stroke-width="19" fill="none"/><path d="M953.5 283.0 C955.7 349.0 974.1 403.8 1042.2 448.8 M975.5 283.0 C979.1 347.0 998.5 401.2 1066.8 446.2 M997.5 283.0 C1002.5 345.0 1022.8 398.8 1091.2 443.8 M1019.5 283.0 C1025.9 343.0 1047.0 396.2 1115.8 441.2 M1041.5 283.0 C1049.3 341.0 1071.3 393.8 1140.2 438.8 M1063.5 283.0 C1072.7 339.0 1095.7 391.2 1164.8 436.2 M1085.5 283.0 C1096.1 337.0 1120.0 388.8 1189.2 433.8 M1107.5 283.0 C1119.5 335.0 1144.2 386.2 1213.8 431.2 M1129.5 283.0 C1142.9 333.0 1168.5 383.8 1238.2 428.8 M1151.5 283.0 C1166.3 331.0 1192.8 381.2 1262.8 426.2" transform="translate(-3 0)" stroke="#3d302c" stroke-width="7" fill="none" opacity="0.8"/></g>
<path d="M1144 283 L1164 296 C1170 340 1190 390 1244 409 L1236 416 C1185 395 1152 345 1144 290 Z" fill="#2f2420" />
<path d="M1164 296 C1170 340 1190 390 1244 409" fill="none" stroke="#3e312c" stroke-width="3"/>
<path d="M917.5 283.0 C921.0 350.0 940.0 410.0 990.0 443.0 L1015 437 L1015.0 437.0 C962.0 405.0 944.0 350.0 942.5 283.0 Z" fill="#2f2420" />
<path d="M921.0 283.0 C925.0 350.0 944.0 408.0 994.0 441.0" fill="none" stroke="#3e312c" stroke-width="3"/>
<path d="M898.0 354.0 L920.0 354.0 L920.0 372.0 L898.0 372.0 Z" fill="#2a201c" />
<path d="M887.0 386.0 L927.0 386.0 L927.0 404.0 L887.0 404.0 Z" fill="#2a201c" />
<path d="M872.0 407.0 L942.0 407.0 L942.0 425.0 L872.0 425.0 Z" fill="#2a201c" />
<path d="M901.0 355.0 L904.0 355.0 L901.0 371.0 L898.0 371.0 Z" fill="#786a4b" />
<path d="M912.0 355.0 L915.0 355.0 L919.0 372.0 L916.0 372.0 Z" fill="#786a4b" />
<path d="M891.0 387.0 L894.0 387.0 L890.0 401.0 L887.0 401.0 Z" fill="#786a4b" />
<path d="M922.0 389.0 L925.0 389.0 L931.0 408.0 L928.0 408.0 Z" fill="#786a4b" />
<path d="M878.0 408.0 L882.0 408.0 L877.0 422.0 L873.0 422.0 Z" fill="#786a4b" />
<path d="M936.0 419.0 L940.0 419.0 L948.0 440.0 L944.0 440.0 Z" fill="#786a4b" />
<path d="M887.0 429.0 L902.0 429.0 L902.0 434.0 L887.0 434.0 Z" fill="#786a4b" />
<path d="M898.0 241.0 L939.0 245.0 L940.0 252.0 L963.0 260.0 L990.0 267.0 L1102.0 274.0 L1133.0 266.0 L1145.0 262.0 L1145.0 294.0 L1143.0 293.0 L940.0 284.0 L906.0 282.0 L898.0 282.0 Z" fill="#2f2521" />
<path d="M892.0 242.0 L898.0 241.0 L898.0 282.0 L894.0 281.0 Z" fill="#8d7c59" />
<path d="M1145.0 262.0 L1173.0 263.0 L1173.0 295.0 L1145.0 294.0 Z" fill="#2a211d" />
<path d="M1138.0 262.0 L1145.0 262.0 L1145.0 270.0 L1140.0 271.0 Z" fill="#786a4b" />
<path d="M1015.0 437.0 L1153.0 431.0 L1153.0 440.0 L1017.0 447.0 Z" fill="#8d7c59" />
<path d="M990.0 438.0 L1016.0 436.0 L1012.0 465.0 L989.0 467.0 Z" fill="#8d7c59" />
<path d="M1244.0 404.0 L1269.0 404.0 L1269.0 431.0 L1256.0 444.0 L1240.0 424.0 Z" fill="#261e1b" />
<path d="M1209.0 428.0 L1238.0 423.0 L1238.0 433.0 L1209.0 440.0 Z" fill="#8d7c59" />
<path d="M1242.0 422.0 L1258.0 423.0 L1253.0 444.0 L1237.0 443.0 Z" fill="#8d7c59" />
<clipPath id="t3"><path d="M739 469 L950 455 C952 560 965 625 990 650 L953 650 L821 674 L788 676 C765 635 744 565 739 469 Z"/></clipPath>
<path d="M739 469 L950 455 C952 560 965 625 990 650 L953 650 L821 674 L788 676 C765 635 744 565 739 469 Z" fill="#1c1614" />
<g clip-path="url(#t3)"><path d="M786.8 440.0 C788.8 569.2 804.6 638.8 839.6 682.0 M816.5 440.0 C818.5 567.5 833.8 636.2 868.8 678.0 M846.2 440.0 C848.2 565.8 862.9 633.8 897.9 674.0 M875.8 440.0 C877.8 564.2 892.1 631.2 927.1 670.0 M905.5 440.0 C907.5 562.5 921.2 628.8 956.2 666.0 M935.2 440.0 C937.2 560.8 950.4 626.2 985.4 662.0" stroke="#332824" stroke-width="26" fill="none"/><path d="M786.8 440.0 C788.8 569.2 804.6 638.8 839.6 682.0 M816.5 440.0 C818.5 567.5 833.8 636.2 868.8 678.0 M846.2 440.0 C848.2 565.8 862.9 633.8 897.9 674.0 M875.8 440.0 C877.8 564.2 892.1 631.2 927.1 670.0 M905.5 440.0 C907.5 562.5 921.2 628.8 956.2 666.0 M935.2 440.0 C937.2 560.8 950.4 626.2 985.4 662.0" transform="translate(-5 0)" stroke="#3d302c" stroke-width="9" fill="none" opacity="0.8"/></g>
<path d="M739.0 469.0 C744.0 565.0 765.0 635.0 788.0 676.0 L821 674 L821.0 674.0 C790.0 640.0 774.0 570.0 772.0 466.0 Z" fill="#2f2420" />
<path d="M744.0 469.0 C749.0 562.0 770.0 636.0 795.0 676.0" fill="none" stroke="#3e312c" stroke-width="3"/>
<path d="M950.0 455.0 C952.0 560.0 965.0 625.0 990.0 650.0" fill="none" stroke="#1a1412" stroke-width="3"/>
<path d="M769.0 426.0 L783.0 434.0 L825.0 438.0 L869.0 437.0 L955.0 437.0 L955.0 456.0 L783.0 460.0 L769.0 467.0 Z" fill="#2f2521" />
<path d="M717.0 426.0 L769.0 426.0 L769.0 467.0 L721.0 468.0 Z" fill="#2a211d" />
<path d="M717.0 428.0 L722.0 428.0 L725.0 467.0 L721.0 468.0 Z" fill="#8d7c59" />
<path d="M983.0 577.0 L1004.0 575.0 L1004.0 581.0 L983.0 583.0 Z" fill="#786a4b" />
<path d="M981.0 597.0 L1006.0 595.0 L1006.0 601.0 L981.0 603.0 Z" fill="#786a4b" />
<path d="M727.0 570.0 L737.0 568.0 L739.0 584.0 L729.0 586.0 Z" fill="#241c19" />
<path d="M750.0 612.0 L760.0 610.0 L762.0 626.0 L752.0 628.0 Z" fill="#241c19" />
<path d="M752.0 650.0 L762.0 648.0 L764.0 664.0 L754.0 666.0 Z" fill="#241c19" />
<path d="M788.0 668.0 L821.0 664.0 L822.0 694.0 L789.0 698.0 Z" fill="#8d7c59" />
<path d="M821.0 666.0 L953.0 644.0 L953.0 654.0 L821.0 675.0 Z" fill="#8d7c59" />
<path d="M953.0 639.0 L981.0 637.0 L985.0 655.0 L955.0 658.0 Z" fill="#8d7c59" />
<clipPath id="t4"><path d="M805.0 690.0 L985.0 656.0 L988.0 792.0 L834.0 852.0 L807.0 854.0 Z"/></clipPath>
<path d="M805.0 690.0 L985.0 656.0 L988.0 792.0 L834.0 852.0 L807.0 854.0 Z" fill="#1d1714" />
<g clip-path="url(#t4)"><path d="M850 640 L851 870" stroke="#2e2420" stroke-width="25"/><path d="M852 640 L853 870" stroke="#382c27" stroke-width="9" opacity="0.8"/><path d="M880 640 L881 870" stroke="#2e2420" stroke-width="25"/><path d="M882 640 L883 870" stroke="#382c27" stroke-width="9" opacity="0.8"/><path d="M910 640 L911 870" stroke="#2e2420" stroke-width="25"/><path d="M912 640 L913 870" stroke="#382c27" stroke-width="9" opacity="0.8"/><path d="M940 640 L941 870" stroke="#2e2420" stroke-width="25"/><path d="M942 640 L943 870" stroke="#382c27" stroke-width="9" opacity="0.8"/><path d="M970 640 L971 870" stroke="#2e2420" stroke-width="25"/><path d="M972 640 L973 870" stroke="#382c27" stroke-width="9" opacity="0.8"/></g>
<path d="M805.0 683.0 L830.0 680.0 L834.0 852.0 L807.0 854.0 Z" fill="#261e1b" />
<path d="M807.0 835.0 L834.0 833.0 L834.0 840.0 L807.0 842.0 Z" fill="#786a4b" />
<path d="M807.0 846.0 L834.0 844.0 L834.0 850.0 L807.0 852.0 Z" fill="#786a4b" />
<path d="M757.0 700.0 L765.0 703.0 L765.0 708.0 L757.0 705.0 Z" fill="#786a4b" />
<clipPath id="t5"><path d="M756.0 658.0 L805.0 690.0 L807.0 854.0 L758.0 725.0 Z"/></clipPath>
<path d="M756.0 658.0 L805.0 690.0 L807.0 854.0 L758.0 725.0 Z" fill="#1a1412" />
<g clip-path="url(#t5)"><path d="M760 640 L764 870" stroke="#30251f" stroke-width="2.5"/><path d="M766 640 L770 870" stroke="#30251f" stroke-width="2.5"/><path d="M772 640 L776 870" stroke="#30251f" stroke-width="2.5"/><path d="M778 640 L782 870" stroke="#30251f" stroke-width="2.5"/><path d="M784 640 L788 870" stroke="#30251f" stroke-width="2.5"/><path d="M790 640 L794 870" stroke="#30251f" stroke-width="2.5"/><path d="M796 640 L800 870" stroke="#30251f" stroke-width="2.5"/><path d="M802 640 L806 870" stroke="#30251f" stroke-width="2.5"/></g>
<path d="M834.0 843.0 L988.0 785.0 L988.0 793.0 L834.0 852.0 Z" fill="#221b19" />
<clipPath id="t6"><path d="M1171.0 520.0 L1090.0 650.0 L1285.0 620.0 Z"/></clipPath>
<path d="M1171.0 520.0 L1090.0 650.0 L1285.0 620.0 Z" fill="#1e1815" />
<g clip-path="url(#t6)"><path d="M1080 500 L1290 530" stroke="#332723" stroke-width="10"/><path d="M1080 514 L1290 544" stroke="#332723" stroke-width="10"/><path d="M1080 528 L1290 558" stroke="#332723" stroke-width="10"/><path d="M1080 542 L1290 572" stroke="#332723" stroke-width="10"/><path d="M1080 556 L1290 586" stroke="#332723" stroke-width="10"/><path d="M1080 570 L1290 600" stroke="#332723" stroke-width="10"/><path d="M1080 584 L1290 614" stroke="#332723" stroke-width="10"/><path d="M1080 598 L1290 628" stroke="#332723" stroke-width="10"/><path d="M1080 612 L1290 642" stroke="#332723" stroke-width="10"/><path d="M1080 626 L1290 656" stroke="#332723" stroke-width="10"/><path d="M1080 640 L1290 670" stroke="#332723" stroke-width="10"/><path d="M1080 654 L1290 684" stroke="#332723" stroke-width="10"/></g>
<clipPath id="t7"><path d="M1011.0 687.0 L1110.0 645.0 L1280.0 612.0 L1265.0 759.0 L1199.0 789.0 L1131.0 807.0 L1051.0 839.0 L1024.0 837.0 L1016.0 700.0 Z"/></clipPath>
<path d="M1011.0 687.0 L1110.0 645.0 L1280.0 612.0 L1265.0 759.0 L1199.0 789.0 L1131.0 807.0 L1051.0 839.0 L1024.0 837.0 L1016.0 700.0 Z" fill="#1d1714" />
<g clip-path="url(#t7)"><path d="M1035 600 L1036 860" stroke="#2e2420" stroke-width="21"/><path d="M1037 600 L1038 860" stroke="#382c27" stroke-width="8" opacity="0.8"/><path d="M1061 600 L1062 860" stroke="#2e2420" stroke-width="21"/><path d="M1063 600 L1064 860" stroke="#382c27" stroke-width="8" opacity="0.8"/><path d="M1087 600 L1088 860" stroke="#2e2420" stroke-width="21"/><path d="M1089 600 L1090 860" stroke="#382c27" stroke-width="8" opacity="0.8"/><path d="M1113 600 L1114 860" stroke="#2e2420" stroke-width="21"/><path d="M1115 600 L1116 860" stroke="#382c27" stroke-width="8" opacity="0.8"/><path d="M1139 600 L1140 860" stroke="#2e2420" stroke-width="21"/><path d="M1141 600 L1142 860" stroke="#382c27" stroke-width="8" opacity="0.8"/><path d="M1165 600 L1166 860" stroke="#2e2420" stroke-width="21"/><path d="M1167 600 L1168 860" stroke="#382c27" stroke-width="8" opacity="0.8"/><path d="M1191 600 L1192 860" stroke="#2e2420" stroke-width="21"/><path d="M1193 600 L1194 860" stroke="#382c27" stroke-width="8" opacity="0.8"/><path d="M1217 600 L1218 860" stroke="#2e2420" stroke-width="21"/><path d="M1219 600 L1220 860" stroke="#382c27" stroke-width="8" opacity="0.8"/><path d="M1243 600 L1244 860" stroke="#2e2420" stroke-width="21"/><path d="M1245 600 L1246 860" stroke="#382c27" stroke-width="8" opacity="0.8"/><path d="M1269 600 L1270 860" stroke="#2e2420" stroke-width="21"/><path d="M1271 600 L1272 860" stroke="#382c27" stroke-width="8" opacity="0.8"/></g>
<path d="M1104.0 660.0 L1212.0 640.0 L1214.0 655.0 L1108.0 677.0 Z" fill="#241c19" />
<path d="M1134.0 682.0 L1188.0 672.0 L1185.0 792.0 L1134.0 807.0 Z" fill="#1c1919" />
<path d="M1138 696 L1186 686" stroke="#2f2826" stroke-width="5"/><path d="M1138 710 L1186 700" stroke="#2f2826" stroke-width="5"/><path d="M1138 724 L1186 714" stroke="#2f2826" stroke-width="5"/><path d="M1138 738 L1186 728" stroke="#2f2826" stroke-width="5"/><path d="M1138 752 L1186 742" stroke="#2f2826" stroke-width="5"/><path d="M1138 766 L1186 756" stroke="#2f2826" stroke-width="5"/><path d="M1138 780 L1186 770" stroke="#2f2826" stroke-width="5"/>
<path d="M1116.0 678.0 L1134.0 676.0 L1134.0 815.0 L1116.0 819.0 Z" fill="#241c19" />
<path d="M1188.0 668.0 L1204.0 665.0 L1199.0 789.0 L1185.0 792.0 Z" fill="#241c19" />
<path d="M1104.0 662.0 L1111.0 660.0 L1113.0 684.0 L1106.0 686.0 Z" fill="#8d7c59" />
<path d="M1024.0 826.0 L1051.0 829.0 L1051.0 835.0 L1024.0 832.0 Z" fill="#786a4b" />
<path d="M1024.0 836.0 L1051.0 838.0 L1051.0 843.0 L1024.0 841.0 Z" fill="#786a4b" />
<path d="M1255.0 738.0 L1266.0 737.0 L1266.0 743.0 L1255.0 744.0 Z" fill="#786a4b" />
<path d="M1255.0 748.0 L1266.0 747.0 L1266.0 753.0 L1255.0 754.0 Z" fill="#786a4b" />
<path d="M1051.0 832.0 L1131.0 800.0 L1131.0 807.0 L1051.0 839.0 Z" fill="#221b19" />
<path d="M1199.0 782.0 L1265.0 752.0 L1265.0 759.0 L1199.0 789.0 Z" fill="#221b19" />
<path d="M985.0 648.0 L1011.0 650.0 L1024.0 837.0 L992.0 798.0 L988.0 793.0 Z" fill="#241c19" />
<path d="M1010.0 650.0 L1030.0 655.0 L1038.0 700.0 L1016.0 700.0 Z" fill="#241c19" />
<clipPath id="t8"><path d="M1270.0 598.0 L1313.0 582.0 L1312.0 690.0 L1265.0 700.0 Z"/></clipPath>
<path d="M1270.0 598.0 L1313.0 582.0 L1312.0 690.0 L1265.0 700.0 Z" fill="#1d1714" />
<g clip-path="url(#t8)"><path d="M1274 570 L1274 710" stroke="#2a201c" stroke-width="9"/><path d="M1286 570 L1286 710" stroke="#2a201c" stroke-width="9"/><path d="M1298 570 L1298 710" stroke="#2a201c" stroke-width="9"/><path d="M1310 570 L1310 710" stroke="#2a201c" stroke-width="9"/></g>
<path d="M1305.0 662.0 L1313.0 661.0 L1313.0 666.0 L1305.0 667.0 Z" fill="#786a4b" />
<path d="M1305.0 678.0 L1313.0 677.0 L1313.0 683.0 L1305.0 684.0 Z" fill="#786a4b" />
<clipPath id="t9"><path d="M1238.0 446.0 C1262.0 500.0 1300.0 545.0 1354.0 562.0 L1354 578 L1281 590 L1281.0 584.0 C1235.0 580.0 1205.0 540.0 1190.0 470.0 Z"/></clipPath>
<path d="M1238.0 446.0 C1262.0 500.0 1300.0 545.0 1354.0 562.0 L1354 578 L1281 590 L1281.0 584.0 C1235.0 580.0 1205.0 540.0 1190.0 470.0 Z" fill="#1c1614" />
<g clip-path="url(#t9)"><path d="M1194.8 430.0 C1210.7 536.0 1241.5 576.5 1292.5 587.2 M1204.4 430.0 C1222.1 528.0 1254.5 569.5 1307.5 581.6 M1214.0 430.0 C1233.5 520.0 1267.5 562.5 1322.5 576.0 M1223.6 430.0 C1244.9 512.0 1280.5 555.5 1337.5 570.4 M1233.2 430.0 C1256.3 504.0 1293.5 548.5 1352.5 564.8" stroke="#332824" stroke-width="11" fill="none"/><path d="M1194.8 430.0 C1210.7 536.0 1241.5 576.5 1292.5 587.2 M1204.4 430.0 C1222.1 528.0 1254.5 569.5 1307.5 581.6 M1214.0 430.0 C1233.5 520.0 1267.5 562.5 1322.5 576.0 M1223.6 430.0 C1244.9 512.0 1280.5 555.5 1337.5 570.4 M1233.2 430.0 C1256.3 504.0 1293.5 548.5 1352.5 564.8" transform="translate(2 -1)" stroke="#3d302c" stroke-width="4" fill="none" opacity="0.8"/></g>
<path d="M1190.0 470.0 C1205.0 540.0 1235.0 580.0 1281.0 584.0 L1290 578 L1290.0 578.0 C1245.0 572.0 1215.0 535.0 1200.0 470.0 Z" fill="#2f2420" />
<path d="M1279.0 568.0 L1336.0 560.0 L1338.0 572.0 L1281.0 582.0 Z" fill="#8d7c59" />
<path d="M1338.0 558.0 L1354.0 562.0 L1352.0 578.0 L1338.0 580.0 Z" fill="#8d7c59" />
<clipPath id="t10"><path d="M1101.0 456.0 C1090.0 540.0 1040.0 610.0 960.0 646.0 L982 666 L1011 687 L1011.0 687.0 C1110.0 650.0 1170.0 590.0 1182.0 498.0 L1188 450 Z"/></clipPath>
<path d="M1101.0 456.0 C1090.0 540.0 1040.0 610.0 960.0 646.0 L982 666 L1011 687 L1011.0 687.0 C1110.0 650.0 1170.0 590.0 1182.0 498.0 L1188 450 Z" fill="#1c1614" />
<g clip-path="url(#t10)"><path d="M1111.8 420.0 C1098.0 544.5 1046.5 614.0 959.5 654.0 M1127.4 420.0 C1114.0 553.5 1059.5 622.0 968.5 662.0 M1143.0 420.0 C1130.0 562.5 1072.5 630.0 977.5 670.0 M1158.6 420.0 C1146.0 571.5 1085.5 638.0 986.5 678.0 M1174.2 420.0 C1162.0 580.5 1098.5 646.0 995.5 686.0" stroke="#332824" stroke-width="13" fill="none"/><path d="M1111.8 420.0 C1098.0 544.5 1046.5 614.0 959.5 654.0 M1127.4 420.0 C1114.0 553.5 1059.5 622.0 968.5 662.0 M1143.0 420.0 C1130.0 562.5 1072.5 630.0 977.5 670.0 M1158.6 420.0 C1146.0 571.5 1085.5 638.0 986.5 678.0 M1174.2 420.0 C1162.0 580.5 1098.5 646.0 995.5 686.0" transform="translate(2 -2)" stroke="#3d302c" stroke-width="5" fill="none" opacity="0.8"/></g>
<path d="M1182.0 498.0 C1170.0 590.0 1110.0 650.0 1011.0 687.0 L1014 696 L1014.0 696.0 C1118.0 656.0 1179.0 592.0 1190.0 492.0 Z" fill="#231c1a" />
<path d="M1101.0 456.0 C1090.0 540.0 1040.0 610.0 960.0 646.0" fill="none" stroke="#3e312c" stroke-width="4"/>
<path d="M960.0 644.0 L982.0 646.0 L983.0 668.0 L962.0 668.0 Z" fill="#8d7c59" />
<path d="M984.0 652.0 L1000.0 658.0 L1010.0 692.0 L993.0 688.0 Z" fill="#786a4b" />
<path d="M1153.0 432.0 L1188.0 429.0 L1188.0 462.0 L1157.0 462.0 Z" fill="#241c19" />
<path d="M1187.0 431.0 L1209.0 431.0 L1209.0 475.0 L1187.0 476.0 Z" fill="#8d7c59" />
<path d="M1156.0 564.0 L1170.0 554.0 L1174.0 562.0 L1160.0 572.0 Z" fill="#1e1815" />
<path d="M1162.0 568.0 L1174.0 559.0 L1177.0 565.0 L1165.0 574.0 Z" fill="#8d7c59" />
<path d="M1192.0 547.0 L1206.0 557.0 L1202.0 565.0 L1188.0 555.0 Z" fill="#1e1815" />
<path d="M1202.0 553.0 L1214.0 561.0 L1210.0 568.0 L1198.0 560.0 Z" fill="#8d7c59" />
<path d="M1124.0 604.0 L1138.0 594.0 L1142.0 602.0 L1128.0 612.0 Z" fill="#1e1815" />
<path d="M1130.0 608.0 L1142.0 599.0 L1145.0 605.0 L1133.0 614.0 Z" fill="#8d7c59" />
<path d="M1219.0 576.0 L1233.0 586.0 L1229.0 594.0 L1215.0 584.0 Z" fill="#1e1815" />
<path d="M1229.0 582.0 L1241.0 590.0 L1237.0 597.0 L1225.0 589.0 Z" fill="#8d7c59" />
<path d="M1079.0 646.0 L1093.0 636.0 L1097.0 644.0 L1083.0 654.0 Z" fill="#1e1815" />
<path d="M1085.0 650.0 L1097.0 641.0 L1100.0 647.0 L1088.0 656.0 Z" fill="#8d7c59" />
<path d="M1249.0 600.0 L1263.0 610.0 L1259.0 618.0 L1245.0 608.0 Z" fill="#1e1815" />
<path d="M1259.0 606.0 L1271.0 614.0 L1267.0 621.0 L1255.0 613.0 Z" fill="#8d7c59" /></g></svg></div>
<div style="left:1868px;top:236px;width:28px;height:28px;background:#fff;border-radius:1px"></div>
<svg style="left:1868px;top:236px" width="28" height="28" viewBox="0 0 28 28"><path d="M5 7 L9.5 2 H19 V16.5 L15 20 H5 Z" fill="#fff" stroke="#555" stroke-width="1.8" stroke-linejoin="round"/><path d="M9.5 2 L5 7 H15 L19 2 Z" fill="#fff" stroke="#555" stroke-width="1.6"/><path d="M15 7 L19 2.5 V16.5 L15 20 Z" fill="#555"/><path d="M5 10 H2 V14 H5" fill="none" stroke="#555" stroke-width="1.6"/><rect x="9.3" y="9.2" width="1.8" height="1.8" fill="#555"/><path d="M6.5 16 H12" stroke="#555" stroke-width="1.4"/><path d="M24.3 15 V23.3 H15" fill="none" stroke="#555" stroke-width="2.2"/><path d="M14 23.3 L17.5 19.8 M14 23.3 L17.5 26.8" stroke="#555" stroke-width="2"/></svg>
<svg style="left:1881px;top:268px" width="14" height="12"><path d="M1 6 H12 M7 1.5 L12 6 L7 10.5" fill="none" stroke="#9a9a9a" stroke-width="1.6"/></svg>
<div style="left:1647px;top:283px;width:250px;height:20px;background:#f6f0d6"></div>
<div style="left:1646px;top:283px;width:252px;height:1px;background:#a9a9a9"></div>
<div style="left:1646px;top:303px;width:252px;height:1px;background:#a9a9a9"></div>
<div style="left:1746px;top:283px;width:1px;height:20px;background:#a9a9a9"></div>
<div class="t" style="left:1650px;top:287px;color:#141414;letter-spacing:0.4px">Subgraphic</div>
<svg style="left:1751px;top:286px" width="32" height="16"><rect x="0" y="0" width="32" height="16" rx="8" fill="#646464"/><circle cx="8" cy="8" r="6" fill="#cfcfcf"/></svg>
<div style="left:1647px;top:303px;width:250px;height:20px;background:#f6f0d6"></div>
<div style="left:1646px;top:303px;width:252px;height:1px;background:#a9a9a9"></div>
<div style="left:1646px;top:323px;width:252px;height:1px;background:#a9a9a9"></div>
<div style="left:1746px;top:303px;width:1px;height:20px;background:#a9a9a9"></div>
<div class="t" style="left:1650px;top:307px;color:#141414;letter-spacing:0.4px">Accurate C...</div>
<svg style="left:1751px;top:306px" width="32" height="16"><rect x="0" y="0" width="32" height="16" rx="8" fill="#646464"/><circle cx="8" cy="8" r="6" fill="#cfcfcf"/></svg>
<div style="left:1647px;top:323px;width:250px;height:20px;background:#f6f0d6"></div>
<div style="left:1646px;top:323px;width:252px;height:1px;background:#a9a9a9"></div>
<div style="left:1646px;top:343px;width:252px;height:1px;background:#a9a9a9"></div>
<div style="left:1746px;top:323px;width:1px;height:20px;background:#a9a9a9"></div>
<div class="t" style="left:1650px;top:327px;color:#141414;letter-spacing:0.4px">Overwrite N...</div>
<svg style="left:1751px;top:326px" width="32" height="16"><rect x="0" y="0" width="32" height="16" rx="8" fill="#646464"/><circle cx="24" cy="8" r="6.5" fill="#fff"/><rect x="23" y="4.5" width="2" height="7" fill="#444"/></svg>
<div style="left:1647px;top:343px;width:250px;height:20px;background:#f6f0d6"></div>
<div style="left:1646px;top:343px;width:252px;height:1px;background:#a9a9a9"></div>
<div style="left:1646px;top:363px;width:252px;height:1px;background:#a9a9a9"></div>
<div style="left:1746px;top:343px;width:1px;height:20px;background:#a9a9a9"></div>
<div class="t" style="left:1650px;top:347px;color:#141414;letter-spacing:0.4px">Billboarding</div>
<svg style="left:1751px;top:346px" width="32" height="16"><rect x="0" y="0" width="32" height="16" rx="8" fill="#646464"/><circle cx="8" cy="8" r="6" fill="#cfcfcf"/></svg>
<div style="left:1649px;top:366px;width:246px;height:29px;background:#c28b00"></div>
<svg style="left:1653px;top:373px" width="14" height="14"><circle cx="7" cy="7" r="6.5" fill="#fff"/><path d="M3.8 5.8 L7 9 L10.2 5.8" fill="none" stroke="#c28b00" stroke-width="2"/></svg>
<div class="t" style="left:1670px;top:372px;color:#f8f0d8;letter-spacing:0.4px">Simple Collision Settings</div>
<div style="left:1647px;top:397px;width:250px;height:20px;background:#f6f0d6"></div>
<div style="left:1646px;top:397px;width:252px;height:1px;background:#a9a9a9"></div>
<div style="left:1646px;top:417px;width:252px;height:1px;background:#a9a9a9"></div>
<div style="left:1746px;top:397px;width:1px;height:20px;background:#a9a9a9"></div>
<div class="t" style="left:1650px;top:401px;color:#141414;letter-spacing:0.4px">Shape</div>
<div class="t" style="left:1750px;top:402px;color:#141414;letter-spacing:0.4px">Mesh</div>
<svg style="left:1880px;top:400px" width="15" height="14"><rect x="0" y="0" width="15" height="14" rx="1.5" fill="#a6a6a6"/><path d="M1.5 2.5 H13.5 L7.5 8.5 Z" fill="#dcdcdc"/></svg>
<div style="left:1647px;top:417px;width:250px;height:20px;background:#f6f0d6"></div>
<div style="left:1646px;top:417px;width:252px;height:1px;background:#a9a9a9"></div>
<div style="left:1646px;top:437px;width:252px;height:1px;background:#a9a9a9"></div>
<div style="left:1746px;top:417px;width:1px;height:20px;background:#a9a9a9"></div>
<div class="t" style="left:1650px;top:421px;color:#141414;letter-spacing:0.4px">Capsule Axis</div>
<div class="t" style="left:1750px;top:422px;color:#141414;letter-spacing:0.4px">Y</div>
<svg style="left:1880px;top:420px" width="15" height="14"><rect x="0" y="0" width="15" height="14" rx="1.5" fill="#a6a6a6"/><path d="M1.5 2.5 H13.5 L7.5 8.5 Z" fill="#dcdcdc"/></svg>
<div style="left:1647px;top:437px;width:250px;height:20px;background:#e8e8e8"></div>
<div style="left:1646px;top:437px;width:252px;height:1px;background:#a9a9a9"></div>
<div style="left:1646px;top:457px;width:252px;height:1px;background:#a9a9a9"></div>
<div style="left:1746px;top:437px;width:1px;height:20px;background:#a9a9a9"></div>
<div class="t" style="left:1650px;top:441px;color:#a0a0a0;letter-spacing:0.4px">Mesh Model...</div>
<div class="t" style="left:1750px;top:441px;color:#a0a0a0;letter-spacing:0.4px">chalet-building-04-...</div>
<div style="left:1647px;top:457px;width:250px;height:133px;background:#f6f0d6"></div>
<div style="left:1646px;top:457px;width:252px;height:1px;background:#a9a9a9"></div>
<div style="left:1646px;top:590px;width:252px;height:1px;background:#a9a9a9"></div>
<div style="left:1746px;top:457px;width:1px;height:133px;background:#a9a9a9"></div>
<div class="t" style="left:1650px;top:518px;color:#141414;letter-spacing:0.4px">Mesh</div>
<div style="left:1747px;top:460px;width:128px;height:128px;background:#4b4b4b;overflow:hidden"><svg width="128" height="128"><path d="M21.3 76.4 L29.1 68.7 L40.8 62.2 L38.8 53.8 L47.9 45.3 L78.4 37.6 L83.5 51.8 L99.1 50.5 L108.2 75.2 L103 93.3 L90 98.5 L75.8 101 L73.2 107.6 L62.8 110.1 L57.6 105 L40.8 110.1 L25.2 97.2 L23.9 79 Z" fill="#fff"/></svg></div>
<div style="left:1868px;top:543px;width:28px;height:28px;background:#fff;border-radius:1px"></div>
<svg style="left:1868px;top:543px" width="28" height="28" viewBox="0 0 28 28"><path d="M5 7 L9.5 2 H19 V16.5 L15 20 H5 Z" fill="#fff" stroke="#555" stroke-width="1.8" stroke-linejoin="round"/><path d="M9.5 2 L5 7 H15 L19 2 Z" fill="#fff" stroke="#555" stroke-width="1.6"/><path d="M15 7 L19 2.5 V16.5 L15 20 Z" fill="#555"/><path d="M5 10 H2 V14 H5" fill="none" stroke="#555" stroke-width="1.6"/><rect x="9.3" y="9.2" width="1.8" height="1.8" fill="#555"/><path d="M6.5 16 H12" stroke="#555" stroke-width="1.4"/><path d="M24.3 15 V23.3 H15" fill="none" stroke="#555" stroke-width="2.2"/><path d="M14 23.3 L17.5 19.8 M14 23.3 L17.5 26.8" stroke="#555" stroke-width="2"/></svg>
<svg style="left:1881px;top:575px" width="14" height="12"><path d="M1 6 H12 M7 1.5 L12 6 L7 10.5" fill="none" stroke="#9a9a9a" stroke-width="1.6"/></svg>
<div style="left:1647px;top:590px;width:250px;height:20px;background:#f6f0d6"></div>
<div style="left:1646px;top:590px;width:252px;height:1px;background:#a9a9a9"></div>
<div style="left:1646px;top:610px;width:252px;height:1px;background:#a9a9a9"></div>
<div style="left:1746px;top:590px;width:1px;height:20px;background:#a9a9a9"></div>
<div class="t" style="left:1650px;top:594px;color:#141414;letter-spacing:0.4px">Position X</div>
<div class="t" style="left:1750px;top:595px;color:#141414;letter-spacing:0.4px">0</div>
<svg style="left:1880px;top:593px" width="15" height="15"><circle cx="7.5" cy="7.5" r="7" fill="#9c9c9c"/><path d="M4.5 6 L7.5 3.3 L10.5 6 M4.5 9 L7.5 11.7 L10.5 9" fill="none" stroke="#f0ecdc" stroke-width="1.5"/><path d="M4 7.5 H11" stroke="#f0ecdc" stroke-width="1.1"/></svg>
<div style="left:1647px;top:610px;width:250px;height:20px;background:#f6f0d6"></div>
<div style="left:1646px;top:610px;width:252px;height:1px;background:#a9a9a9"></div>
<div style="left:1646px;top:630px;width:252px;height:1px;background:#a9a9a9"></div>
<div style="left:1746px;top:610px;width:1px;height:20px;background:#a9a9a9"></div>
<div class="t" style="left:1650px;top:614px;color:#141414;letter-spacing:0.4px">Position Y</div>
<div class="t" style="left:1750px;top:615px;color:#141414;letter-spacing:0.4px">0</div>
<svg style="left:1880px;top:613px" width="15" height="15"><circle cx="7.5" cy="7.5" r="7" fill="#9c9c9c"/><path d="M4.5 6 L7.5 3.3 L10.5 6 M4.5 9 L7.5 11.7 L10.5 9" fill="none" stroke="#f0ecdc" stroke-width="1.5"/><path d="M4 7.5 H11" stroke="#f0ecdc" stroke-width="1.1"/></svg>
<div style="left:1647px;top:630px;width:250px;height:20px;background:#f6f0d6"></div>
<div style="left:1646px;top:630px;width:252px;height:1px;background:#a9a9a9"></div>
<div style="left:1646px;top:650px;width:252px;height:1px;background:#a9a9a9"></div>
<div style="left:1746px;top:630px;width:1px;height:20px;background:#a9a9a9"></div>
<div class="t" style="left:1650px;top:634px;color:#141414;letter-spacing:0.4px">Position Z</div>
<div class="t" style="left:1750px;top:635px;color:#141414;letter-spacing:0.4px">0</div>
<svg style="left:1880px;top:633px" width="15" height="15"><circle cx="7.5" cy="7.5" r="7" fill="#9c9c9c"/><path d="M4.5 6 L7.5 3.3 L10.5 6 M4.5 9 L7.5 11.7 L10.5 9" fill="none" stroke="#f0ecdc" stroke-width="1.5"/><path d="M4 7.5 H11" stroke="#f0ecdc" stroke-width="1.1"/></svg>
<div style="left:1647px;top:650px;width:250px;height:20px;background:#f6f0d6"></div>
<div style="left:1646px;top:650px;width:252px;height:1px;background:#a9a9a9"></div>
<div style="left:1646px;top:670px;width:252px;height:1px;background:#a9a9a9"></div>
<div style="left:1746px;top:650px;width:1px;height:20px;background:#a9a9a9"></div>
<div class="t" style="left:1650px;top:654px;color:#141414;letter-spacing:0.4px">Rotation X</div>
<div class="t" style="left:1750px;top:655px;color:#141414;letter-spacing:0.4px">0</div>
<svg style="left:1880px;top:653px" width="15" height="15"><circle cx="7.5" cy="7.5" r="7" fill="#9c9c9c"/><path d="M4.5 6 L7.5 3.3 L10.5 6 M4.5 9 L7.5 11.7 L10.5 9" fill="none" stroke="#f0ecdc" stroke-width="1.5"/><path d="M4 7.5 H11" stroke="#f0ecdc" stroke-width="1.1"/></svg>
<div style="left:1647px;top:670px;width:250px;height:20px;background:#f6f0d6"></div>
<div style="left:1646px;top:670px;width:252px;height:1px;background:#a9a9a9"></div>
<div style="left:1646px;top:690px;width:252px;height:1px;background:#a9a9a9"></div>
<div style="left:1746px;top:670px;width:1px;height:20px;background:#a9a9a9"></div>
<div class="t" style="left:1650px;top:674px;color:#141414;letter-spacing:0.4px">Rotation Y</div>
<div class="t" style="left:1750px;top:675px;color:#141414;letter-spacing:0.4px">0</div>
<svg style="left:1880px;top:673px" width="15" height="15"><circle cx="7.5" cy="7.5" r="7" fill="#9c9c9c"/><path d="M4.5 6 L7.5 3.3 L10.5 6 M4.5 9 L7.5 11.7 L10.5 9" fill="none" stroke="#f0ecdc" stroke-width="1.5"/><path d="M4 7.5 H11" stroke="#f0ecdc" stroke-width="1.1"/></svg>
<div style="left:1647px;top:690px;width:250px;height:20px;background:#f6f0d6"></div>
<div style="left:1646px;top:690px;width:252px;height:1px;background:#a9a9a9"></div>
<div style="left:1646px;top:710px;width:252px;height:1px;background:#a9a9a9"></div>
<div style="left:1746px;top:690px;width:1px;height:20px;background:#a9a9a9"></div>
<div class="t" style="left:1650px;top:694px;color:#141414;letter-spacing:0.4px">Rotation Z</div>
<div class="t" style="left:1750px;top:695px;color:#141414;letter-spacing:0.4px">0</div>
<svg style="left:1880px;top:693px" width="15" height="15"><circle cx="7.5" cy="7.5" r="7" fill="#9c9c9c"/><path d="M4.5 6 L7.5 3.3 L10.5 6 M4.5 9 L7.5 11.7 L10.5 9" fill="none" stroke="#f0ecdc" stroke-width="1.5"/><path d="M4 7.5 H11" stroke="#f0ecdc" stroke-width="1.1"/></svg>
<div style="left:1647px;top:710px;width:250px;height:20px;background:#f6f0d6"></div>
<div style="left:1646px;top:710px;width:252px;height:1px;background:#a9a9a9"></div>
<div style="left:1646px;top:730px;width:252px;height:1px;background:#a9a9a9"></div>
<div style="left:1746px;top:710px;width:1px;height:20px;background:#a9a9a9"></div>
<div class="t" style="left:1650px;top:714px;color:#141414;letter-spacing:0.4px">Size X</div>
<div class="t" style="left:1750px;top:715px;color:#141414;letter-spacing:0.4px">1</div>
<svg style="left:1880px;top:713px" width="15" height="15"><circle cx="7.5" cy="7.5" r="7" fill="#9c9c9c"/><path d="M4.5 6 L7.5 3.3 L10.5 6 M4.5 9 L7.5 11.7 L10.5 9" fill="none" stroke="#f0ecdc" stroke-width="1.5"/><path d="M4 7.5 H11" stroke="#f0ecdc" stroke-width="1.1"/></svg>
<div style="left:1647px;top:730px;width:250px;height:20px;background:#f6f0d6"></div>
<div style="left:1646px;top:730px;width:252px;height:1px;background:#a9a9a9"></div>
<div style="left:1646px;top:750px;width:252px;height:1px;background:#a9a9a9"></div>
<div style="left:1746px;top:730px;width:1px;height:20px;background:#a9a9a9"></div>
<div class="t" style="left:1650px;top:734px;color:#141414;letter-spacing:0.4px">Size Y</div>
<div class="t" style="left:1750px;top:735px;color:#141414;letter-spacing:0.4px">1</div>
<svg style="left:1880px;top:733px" width="15" height="15"><circle cx="7.5" cy="7.5" r="7" fill="#9c9c9c"/><path d="M4.5 6 L7.5 3.3 L10.5 6 M4.5 9 L7.5 11.7 L10.5 9" fill="none" stroke="#f0ecdc" stroke-width="1.5"/><path d="M4 7.5 H11" stroke="#f0ecdc" stroke-width="1.1"/></svg>
<div style="left:1647px;top:750px;width:250px;height:20px;background:#f6f0d6"></div>
<div style="left:1646px;top:750px;width:252px;height:1px;background:#a9a9a9"></div>
<div style="left:1646px;top:770px;width:252px;height:1px;background:#a9a9a9"></div>
<div style="left:1746px;top:750px;width:1px;height:20px;background:#a9a9a9"></div>
<div class="t" style="left:1650px;top:754px;color:#141414;letter-spacing:0.4px">Size Z</div>
<div class="t" style="left:1750px;top:755px;color:#141414;letter-spacing:0.4px">1</div>
<svg style="left:1880px;top:753px" width="15" height="15"><circle cx="7.5" cy="7.5" r="7" fill="#9c9c9c"/><path d="M4.5 6 L7.5 3.3 L10.5 6 M4.5 9 L7.5 11.7 L10.5 9" fill="none" stroke="#f0ecdc" stroke-width="1.5"/><path d="M4 7.5 H11" stroke="#f0ecdc" stroke-width="1.1"/></svg>
<div style="left:1647px;top:770px;width:250px;height:20px;background:#f6f0d6"></div>
<div style="left:1646px;top:770px;width:252px;height:1px;background:#a9a9a9"></div>
<div style="left:1646px;top:790px;width:252px;height:1px;background:#a9a9a9"></div>
<div style="left:1746px;top:770px;width:1px;height:20px;background:#a9a9a9"></div>
<div class="t" style="left:1650px;top:774px;color:#141414;letter-spacing:0.4px">Terrain Assi...</div>
<div class="t" style="left:1750px;top:775px;color:#141414;letter-spacing:0.4px">None</div>
<svg style="left:1880px;top:773px" width="15" height="14"><rect x="0" y="0" width="15" height="14" rx="1.5" fill="#a6a6a6"/><path d="M1.5 2.5 H13.5 L7.5 8.5 Z" fill="#dcdcdc"/></svg>
<div style="left:1649px;top:793px;width:246px;height:29px;background:#c28b00"></div>
<svg style="left:1653px;top:800px" width="14" height="14"><circle cx="7" cy="7" r="6.5" fill="#fff"/><path d="M3.8 5.8 L7 9 L10.2 5.8" fill="none" stroke="#c28b00" stroke-width="2"/></svg>
<div class="t" style="left:1670px;top:799px;color:#f8f0d8;letter-spacing:0.4px">Motion Setting</div>
<div style="left:1647px;top:824px;width:250px;height:20px;background:#e8e8e8"></div>
<div style="left:1646px;top:824px;width:252px;height:1px;background:#a9a9a9"></div>
<div style="left:1646px;top:844px;width:252px;height:1px;background:#a9a9a9"></div>
<div style="left:1746px;top:824px;width:1px;height:20px;background:#a9a9a9"></div>
<div class="t" style="left:1650px;top:828px;color:#a0a0a0;letter-spacing:0.4px">Motion Name</div>
<div style="left:1647px;top:844px;width:250px;height:133px;background:#f6f0d6"></div>
<div style="left:1646px;top:844px;width:252px;height:1px;background:#a9a9a9"></div>
<div style="left:1646px;top:977px;width:252px;height:1px;background:#a9a9a9"></div>
<div style="left:1746px;top:844px;width:1px;height:133px;background:#a9a9a9"></div>
<div class="t" style="left:1650px;top:905px;color:#141414;letter-spacing:0.4px">Motion</div>
<svg style="left:1881px;top:962px" width="14" height="12"><path d="M1 6 H12 M7 1.5 L12 6 L7 10.5" fill="none" stroke="#9a9a9a" stroke-width="1.6"/></svg>
<div style="left:1649px;top:980px;width:246px;height:29px;background:#c28b00"></div>
<svg style="left:1653px;top:987px" width="14" height="14"><circle cx="7" cy="7" r="6.5" fill="#fff"/><path d="M3.8 5.8 L7 9 L10.2 5.8" fill="none" stroke="#c28b00" stroke-width="2"/></svg>
<div class="t" style="left:1670px;top:986px;color:#f8f0d8;letter-spacing:0.4px">Materials Used</div>
<div style="left:1647px;top:1011px;width:250px;height:20px;background:#e8e8e8"></div>
<div style="left:1646px;top:1011px;width:252px;height:1px;background:#a9a9a9"></div>
<div style="left:1646px;top:1031px;width:252px;height:1px;background:#a9a9a9"></div>
<div style="left:1746px;top:1011px;width:1px;height:20px;background:#a9a9a9"></div>
<div class="t" style="left:1650px;top:1015px;color:#a0a0a0;letter-spacing:0.4px">Material Na...</div>
<div class="t" style="left:1750px;top:1015px;color:#a0a0a0;letter-spacing:0.4px">main-chalet-pack-b...</div>
<div style="left:1898px;top:96px;width:17px;height:939px;background:#f0f0f0"></div>
<div style="left:1906px;top:113px;width:2px;height:554px;background:#8a8a8a"></div>
<div style="left:5px;top:1039px;width:1910px;height:36px;background:#6a6a6a"></div>
<div class="t" style="left:7px;top:1049px;color:#f4f4f4;font-size:13.5px;transform:scaleX(1.079);transform-origin:0 0">Manage all materials used in the game, including 3D models, textures, sprites, images, and sounds. 3D stamps and 2D stamps are also created here.</div>
<div style="left:1712px;top:1045px;width:92px;height:24px;background:#b8b8b8;border-radius:4px"></div>
<div style="left:1717px;top:1048px;width:18px;height:18px;background:#5c8ce0;border-radius:2px"></div>
<svg style="left:1717px;top:1048px" width="18" height="18"><path d="M3.5 9 L7.5 13 L14.5 5" fill="none" stroke="#fff" stroke-width="2.4"/></svg>
<div class="t" style="left:1742px;top:1049px;font-size:13px">OK</div>
<div style="left:1808px;top:1045px;width:101px;height:24px;background:#b8b8b8;border-radius:4px"></div>
<div style="left:1813px;top:1048px;width:18px;height:18px;background:#e05b7f;border-radius:2px"></div>
<svg style="left:1813px;top:1048px" width="18" height="18"><path d="M4.5 4.5 L13.5 13.5 M13.5 4.5 L4.5 13.5" stroke="#fff" stroke-width="2.2"/></svg>
<div class="t" style="left:1838px;top:1049px;font-size:13px">Cancel</div>
</body></html>
